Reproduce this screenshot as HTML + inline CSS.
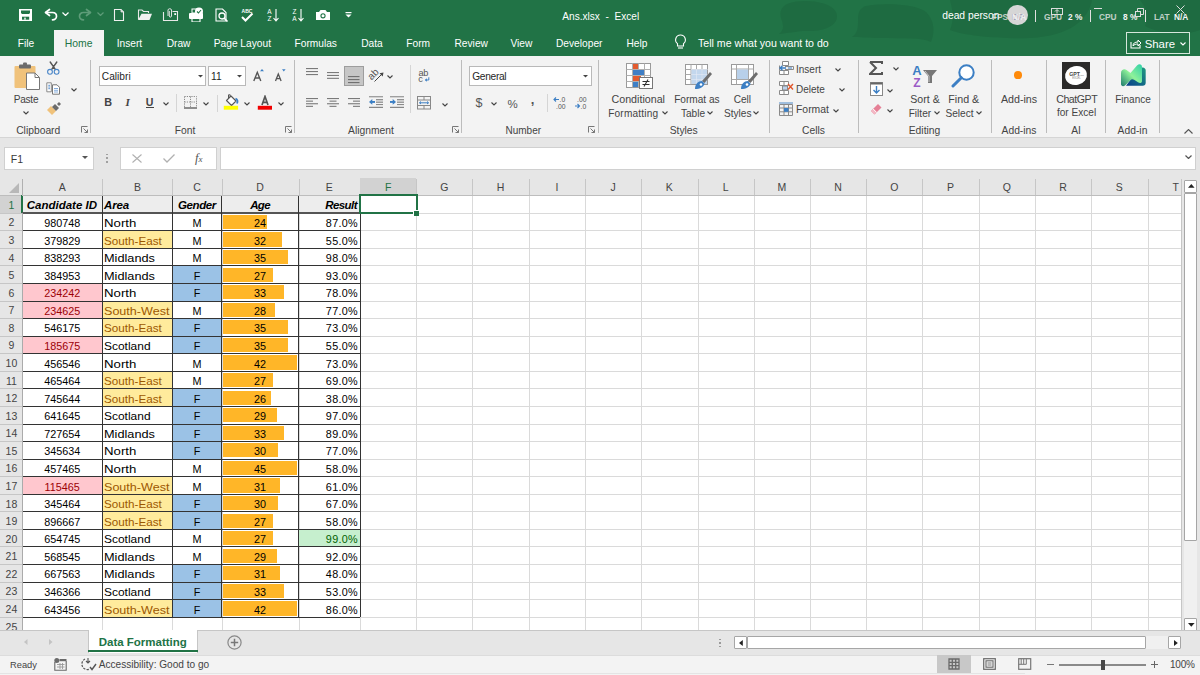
<!DOCTYPE html><html><head><meta charset="utf-8"><style>
*{margin:0;padding:0;box-sizing:border-box}
html,body{width:1200px;height:675px;overflow:hidden}body{position:relative;font-family:"Liberation Sans", sans-serif;background:#fff}
.a{position:absolute;white-space:nowrap}
</style></head><body><div style="position:absolute;left:0;top:0;width:1200px;height:675px;overflow:hidden;background:#fff">
<div class="a" style="left:0.00px;top:0.00px;width:1200.00px;height:56.00px;background:#217346;"></div>
<svg class="a" style="left:0;top:0" width="1200" height="56" viewBox="0 0 1200 56"><g fill="#1e6a40" opacity="0.8"><path d="M790 3 C800 -1 830 0 836 12 C841 24 826 32 806 31 C797 31 790 33 779 34 C785 29 783 24 781 18 C779 10 783 5 790 3Z"/><path d="M866 6 C880 3 915 3 926 12 C936 22 934 35 931 42 C922 37 905 39 880 38 C868 38 860 37 852 37 C858 33 858 28 858 20 C858 12 860 8 866 6Z"/><path d="M950 0 H1092 C1088 20 1070 36 1030 38 C1000 39 965 36 950 30 C955 18 952 8 950 0Z"/><path d="M1140 0 H1200 V30 C1185 36 1160 34 1145 26 C1150 16 1146 8 1140 0Z"/></g></svg>
<svg class="a" style="left:19.00px;top:8.00px" width="14" height="14" viewBox="0 0 14 14"><rect x="0" y="1" width="13" height="12" fill="#fff"/><path d="M2 2.5 H11 V5 L10 6 H3 L2 5Z" fill="#217346"/><rect x="3" y="8.7" width="7.2" height="3" fill="#217346"/><rect x="5.3" y="9.6" width="1.4" height="2.1" fill="#fff"/></svg>
<svg class="a" style="left:44.00px;top:8.00px" width="14" height="13" viewBox="0 0 14 13"><path d="M5.5 1.5 L1.5 4.5 L5.5 7.5" fill="none" stroke="#fff" stroke-width="1.7" stroke-linejoin="round" stroke-linecap="round"/><path d="M2 4.5 H8.5 C11 4.5 12.5 6.2 12.5 8.3 C12.5 10.4 10.8 11.8 8.5 11.8" fill="none" stroke="#fff" stroke-width="1.7" stroke-linecap="round"/></svg>
<svg class="a" style="left:62.00px;top:12.00px" width="7" height="4" viewBox="0 0 7 4"><path d="M0.5 0.5 L3.5 3.5 L6.5 0.5" fill="none" stroke="#fff" stroke-width="1.2"/></svg>
<svg class="a" style="left:78.00px;top:8.00px" width="14" height="13" viewBox="0 0 14 13"><path d="M8.5 1.5 L12.5 4.5 L8.5 7.5" fill="none" stroke="#5e9c79" stroke-width="1.7" stroke-linejoin="round" stroke-linecap="round"/><path d="M12 4.5 H5.5 C3 4.5 1.5 6.2 1.5 8.3 C1.5 10.4 3.2 11.8 5.5 11.8" fill="none" stroke="#5e9c79" stroke-width="1.7" stroke-linecap="round"/></svg>
<svg class="a" style="left:97.00px;top:12.00px" width="7" height="4" viewBox="0 0 7 4"><path d="M0.5 0.5 L3.5 3.5 L6.5 0.5" fill="none" stroke="#5e9c79" stroke-width="1.2"/></svg>
<svg class="a" style="left:113.00px;top:8.00px" width="12" height="14" viewBox="0 0 12 14"><path d="M1.5 1.5 H8 L10.5 4 V12.5 H1.5 Z" fill="none" stroke="#f0f0f0" stroke-width="1.1"/><path d="M8 1.5 V4 H10.5" fill="#ddd" stroke="#ddd" stroke-width="0.8"/></svg>
<svg class="a" style="left:137.00px;top:8.00px" width="16" height="13" viewBox="0 0 16 13"><path d="M1.5 11.5 V2 H5 L6.5 3.5 H11.5 V5" fill="none" stroke="#e8e8e8" stroke-width="1.1"/><path d="M4.5 5.8 H15 L12.5 12 H1 Z" fill="#f0f0f0"/></svg>
<svg class="a" style="left:162.00px;top:7.00px" width="17" height="15" viewBox="0 0 17 15"><path d="M1.5 5 V13.5 H15.5 V4.5 H10.5" fill="none" stroke="#e8e8e8" stroke-width="1.1"/><path d="M6 9 V3 C6 1.3 9.5 1.3 9.5 3 V9 C9.5 10.5 7.3 10.5 7.3 9 V4" fill="none" stroke="#e0e0e0" stroke-width="1"/><rect x="12.3" y="6.2" width="1.8" height="1.8" fill="#fff"/></svg>
<svg class="a" style="left:188.00px;top:7.00px" width="16" height="15" viewBox="0 0 16 15"><rect x="1" y="6" width="14" height="6" rx="1" fill="#fff"/><rect x="4" y="10" width="8" height="5" fill="none" stroke="#fff" stroke-width="1.1"/><rect x="4" y="2" width="6" height="4" fill="none" stroke="#fff" stroke-width="1"/><circle cx="11" cy="4.5" r="4" fill="#fff"/><path d="M9 4.5 L10.5 6 L13 3" fill="none" stroke="#217346" stroke-width="1.1"/></svg>
<svg class="a" style="left:215.00px;top:8.00px" width="14" height="14" viewBox="0 0 14 14"><path d="M1 1 H7.5 L11 4.5 V13 H1 Z" fill="none" stroke="#fff" stroke-width="1.1"/><circle cx="7" cy="8" r="3" fill="none" stroke="#fff" stroke-width="1.3"/><path d="M9 10 L12.5 13.5" stroke="#fff" stroke-width="1.6"/></svg>
<svg class="a" style="left:240.00px;top:8.00px" width="14" height="14" viewBox="0 0 14 14"><text x="7" y="4.5" font-size="5" font-weight="bold" text-anchor="middle" fill="#fff" font-family="Liberation Sans">ABC</text><path d="M2 9 L5.5 12.5 L12.5 5.5" fill="none" stroke="#fff" stroke-width="2"/></svg>
<svg class="a" style="left:266.00px;top:8.00px" width="14" height="14" viewBox="0 0 14 14"><text x="3.5" y="6" font-size="6.5" text-anchor="middle" fill="#fff" font-family="Liberation Sans">A</text><text x="3.5" y="13" font-size="6.5" text-anchor="middle" fill="#fff" font-family="Liberation Sans">Z</text><path d="M10 1 V12.5 M7.5 10 L10 12.8 L12.5 10" fill="none" stroke="#fff" stroke-width="1.1"/></svg>
<svg class="a" style="left:291.00px;top:8.00px" width="14" height="14" viewBox="0 0 14 14"><text x="3.5" y="6" font-size="6.5" text-anchor="middle" fill="#fff" font-family="Liberation Sans">Z</text><text x="3.5" y="13" font-size="6.5" text-anchor="middle" fill="#fff" font-family="Liberation Sans">A</text><path d="M10 1 V12.5 M7.5 10 L10 12.8 L12.5 10" fill="none" stroke="#fff" stroke-width="1.1"/></svg>
<svg class="a" style="left:315.00px;top:9.00px" width="16" height="12" viewBox="0 0 16 12"><path d="M1 3 H4 L5.5 1 H10.5 L12 3 H15 V11 H1 Z" fill="#fff"/><circle cx="8" cy="6.8" r="2.6" fill="#217346"/><circle cx="8" cy="6.8" r="1.5" fill="#fff"/></svg>
<svg class="a" style="left:345.00px;top:12.00px" width="7" height="6" viewBox="0 0 7 6"><rect x="0.5" y="0" width="6" height="1.2" fill="#fff"/><path d="M0.5 2.5 H6.5 L3.5 5.5 Z" fill="#fff"/></svg>
<div class="a" style="left:562.30px;top:12px;font-size:10.1px;line-height:10.1px;color:#fff;font-weight:normal;font-style:normal;">Ans.xlsx&nbsp;&nbsp;-&nbsp;&nbsp;Excel</div>
<div class="a" style="left:942.20px;top:11px;font-size:10.3px;line-height:10.3px;color:#fff;font-weight:normal;font-style:normal;">dead person</div>
<div class="a" style="left:1007.3px;top:4.6px;width:20.4px;height:20.4px;border-radius:50%;background:#d6d6d6"></div>
<div class="a" style="left:1011.50px;top:12px;font-size:9.5px;line-height:9.5px;color:#9a98b0;font-weight:normal;font-style:normal;">DP</div>
<div class="a" style="left:992.00px;top:13px;font-size:8.3px;line-height:8.3px;color:#e8e8e8;font-weight:bold;font-style:normal;opacity:.8">FPS</div>
<div class="a" style="left:1012.00px;top:13px;font-size:8.3px;line-height:8.3px;color:#f5f5f5;font-weight:bold;font-style:normal;opacity:.9">N/A</div>
<div class="a" style="left:1035.00px;top:9.50px;width:1.00px;height:12.00px;background:#e0e0e0;"></div>
<div class="a" style="left:1044.00px;top:13px;font-size:8.3px;line-height:8.3px;color:#e8e8e8;font-weight:bold;font-style:normal;opacity:.8">GPU</div>
<div class="a" style="left:1068.00px;top:13px;font-size:8.3px;line-height:8.3px;color:#f5f5f5;font-weight:bold;font-style:normal;">2 %</div>
<svg class="a" style="left:1051.00px;top:8.00px" width="13" height="7" viewBox="0 0 13 7"><rect x="0.5" y="0.5" width="11" height="6" fill="none" stroke="#ddd" stroke-width="1"/><path d="M6 5.5 V2 M4 3.5 L6 1.5 L8 3.5" stroke="#ddd" fill="none" stroke-width="1"/></svg>
<div class="a" style="left:1090.00px;top:9.50px;width:1.00px;height:12.00px;background:#e0e0e0;"></div>
<div class="a" style="left:1099.00px;top:13px;font-size:8.3px;line-height:8.3px;color:#e8e8e8;font-weight:bold;font-style:normal;opacity:.8">CPU</div>
<div class="a" style="left:1123.00px;top:13px;font-size:8.3px;line-height:8.3px;color:#f5f5f5;font-weight:bold;font-style:normal;">8 %</div>
<svg class="a" style="left:1094.00px;top:8.00px" width="8" height="2" viewBox="0 0 8 2"><rect x="0" y="0" width="8" height="1" fill="#ddd"/></svg>
<svg class="a" style="left:1135.00px;top:8.00px" width="9" height="10" viewBox="0 0 9 10"><rect x="0.5" y="3.5" width="5" height="5" fill="none" stroke="#ddd"/><path d="M2.5 3.5 V0.5 H8.5 V6.5 H5.5" fill="none" stroke="#ddd"/></svg>
<div class="a" style="left:1145.00px;top:9.50px;width:1.00px;height:12.00px;background:#e0e0e0;"></div>
<div class="a" style="left:1154.00px;top:13px;font-size:8.3px;line-height:8.3px;color:#e8e8e8;font-weight:bold;font-style:normal;opacity:.8">LAT</div>
<div class="a" style="left:1174.00px;top:13px;font-size:8.3px;line-height:8.3px;color:#f5f5f5;font-weight:bold;font-style:normal;">N/A</div>
<svg class="a" style="left:1176.00px;top:5.00px" width="9" height="9" viewBox="0 0 9 9"><path d="M0.5 0.5 L8.5 8.5 M8.5 0.5 L0.5 8.5" stroke="#ddd" stroke-width="1"/></svg>
<div class="a" style="left:53.70px;top:30.00px;width:50.80px;height:26.00px;background:#f3f3f3;"></div>
<div class="a" style="left:17.80px;top:39px;font-size:10.2px;line-height:10.2px;color:#fff;font-weight:normal;font-style:normal;">File</div>
<div class="a" style="left:116.70px;top:39px;font-size:10.2px;line-height:10.2px;color:#fff;font-weight:normal;font-style:normal;">Insert</div>
<div class="a" style="left:166.70px;top:39px;font-size:10.2px;line-height:10.2px;color:#fff;font-weight:normal;font-style:normal;">Draw</div>
<div class="a" style="left:213.75px;top:39px;font-size:10.2px;line-height:10.2px;color:#fff;font-weight:normal;font-style:normal;">Page Layout</div>
<div class="a" style="left:294.50px;top:39px;font-size:10.2px;line-height:10.2px;color:#fff;font-weight:normal;font-style:normal;">Formulas</div>
<div class="a" style="left:361.25px;top:39px;font-size:10.2px;line-height:10.2px;color:#fff;font-weight:normal;font-style:normal;">Data</div>
<div class="a" style="left:406.25px;top:39px;font-size:10.2px;line-height:10.2px;color:#fff;font-weight:normal;font-style:normal;">Form</div>
<div class="a" style="left:454.50px;top:39px;font-size:10.2px;line-height:10.2px;color:#fff;font-weight:normal;font-style:normal;">Review</div>
<div class="a" style="left:510.40px;top:39px;font-size:10.2px;line-height:10.2px;color:#fff;font-weight:normal;font-style:normal;">View</div>
<div class="a" style="left:556.00px;top:39px;font-size:10.2px;line-height:10.2px;color:#fff;font-weight:normal;font-style:normal;">Developer</div>
<div class="a" style="left:626.50px;top:39px;font-size:10.2px;line-height:10.2px;color:#fff;font-weight:normal;font-style:normal;">Help</div>
<div class="a" style="left:64.70px;top:39px;font-size:10.4px;line-height:10.4px;color:#217346;font-weight:normal;font-style:normal;">Home</div>
<svg class="a" style="left:674.00px;top:34.00px" width="13" height="16" viewBox="0 0 13 16"><path d="M6.5 1 a4.8 4.8 0 0 0 -3 8.6 V12 H9.5 V9.6 A4.8 4.8 0 0 0 6.5 1 Z" fill="none" stroke="#fff" stroke-width="1.1"/><path d="M4 14 H9" stroke="#fff" stroke-width="1.1"/></svg>
<div class="a" style="left:698.00px;top:38px;font-size:10.6px;line-height:10.6px;color:#fff;font-weight:normal;font-style:normal;">Tell me what you want to do</div>
<div class="a" style="left:1126px;top:32.4px;width:63.5px;height:21.3px;border:1px solid #d6e7dc;"></div>
<svg class="a" style="left:1130.00px;top:38.00px" width="12" height="11" viewBox="0 0 12 11"><path d="M1 4 V10 H10 V7" fill="none" stroke="#fff" stroke-width="1.1"/><path d="M3 8 C3 5 5 4 8 4 V2 L11 5 L8 8 V6 C6 6 4 6.5 3 8Z" fill="none" stroke="#fff" stroke-width="1"/></svg>
<div class="a" style="left:1144.70px;top:39px;font-size:11.4px;line-height:11.4px;color:#fff;font-weight:normal;font-style:normal;">Share</div>
<svg class="a" style="left:1180.00px;top:41.50px" width="6" height="4" viewBox="0 0 6 4"><path d="M0.5 0.5 L3 3 L5.5 0.5" fill="none" stroke="#fff" stroke-width="1.1"/></svg>
<div class="a" style="left:0.00px;top:56.00px;width:1200.00px;height:81.00px;background:#f3f3f3;"></div>
<div class="a" style="left:0.00px;top:137.00px;width:1200.00px;height:1.00px;background:#d5d5d5;"></div>
<svg class="a" style="left:13.00px;top:62.00px" width="28" height="29" viewBox="0 0 28 29"><rect x="1.5" y="4" width="21" height="22" rx="1" fill="#f0c27b"/><rect x="6" y="2.5" width="12" height="4" rx="1" fill="#6b6b6b"/><rect x="10" y="0.5" width="4" height="3" rx="1" fill="#6b6b6b"/><path d="M13.5 11 H22 L26.5 15.5 V27.5 H13.5 Z" fill="#fff" stroke="#777" stroke-width="1"/><path d="M22 11 V15.5 H26.5" fill="none" stroke="#777" stroke-width="1"/></svg>
<div class="a" style="left:13.70px;top:95px;font-size:10.1px;line-height:10.1px;color:#444444;font-weight:normal;font-style:normal;letter-spacing:-0.25px">Paste</div>
<svg class="a" style="left:23.00px;top:111.30px" width="6" height="4" viewBox="0 0 6 4"><path d="M0.5 0.5 L3 3 L5.5 0.5" fill="none" stroke="#444" stroke-width="1.1"/></svg>
<svg class="a" style="left:46.00px;top:61.00px" width="15" height="15" viewBox="0 0 15 15"><path d="M4.2 1 L9.3 8.3 M10.8 1 L5.7 8.3" stroke="#555" stroke-width="1.4" stroke-linecap="round"/><circle cx="4" cy="10.8" r="2.4" fill="none" stroke="#4a86c8" stroke-width="1.1"/><circle cx="10.6" cy="10.8" r="2.4" fill="none" stroke="#4a86c8" stroke-width="1.1"/></svg>
<svg class="a" style="left:46.00px;top:82.00px" width="15" height="13" viewBox="0 0 15 13"><path d="M0.8 0.8 H5.3 V9.8 H0.8 Z" fill="#fff" stroke="#8a8a8a" stroke-width="1"/><path d="M2.3 3.3 H4 M2.3 5 H4 M2.3 6.7 H4" stroke="#4a86c8" stroke-width="0.9"/><path d="M6.5 2.8 H11 L13.5 5.3 V12.2 H6.5 Z" fill="#fff" stroke="#777" stroke-width="1"/><path d="M8 6.5 H12 M8 8.3 H12 M8 10 H12" stroke="#7aa6da" stroke-width="0.9"/></svg>
<svg class="a" style="left:71.00px;top:88.00px" width="6" height="4" viewBox="0 0 6 4"><path d="M0.5 0.5 L3 3 L5.5 0.5" fill="none" stroke="#444" stroke-width="1.1"/></svg>
<svg class="a" style="left:46.00px;top:102.00px" width="15" height="13" viewBox="0 0 15 13"><path d="M1 8 L6 13 L10 9 L5 4 Z" fill="#f0c27b"/><path d="M6 5 L9 2 L13 6 L10 9 Z" fill="#6b6b6b"/><path d="M11 2 L13 0 L15 2 L13 4Z" fill="#6b6b6b"/></svg>
<div class="a" style="left:16.20px;top:126px;font-size:10.3px;line-height:10.3px;color:#444444;font-weight:normal;font-style:normal;">Clipboard</div>
<svg class="a" style="left:80.80px;top:126.30px" width="8" height="7" viewBox="0 0 8 7"><path d="M0.5 6.5 V0.5 H6.5" fill="none" stroke="#777" stroke-width="1"/><path d="M2.5 2.5 L6.5 6.5 M3.5 6.5 H6.5 V3.5" fill="none" stroke="#777" stroke-width="1"/></svg>
<div class="a" style="left:90.00px;top:59.70px;width:1.00px;height:73.30px;background:#bcbcbc;"></div>
<div class="a" style="left:98.5px;top:66.2px;width:107.7px;height:19.4px;background:#fff;border:1px solid #b9b9b9"></div>
<div class="a" style="left:101.80px;top:72px;font-size:10.2px;line-height:10.2px;color:#262626;font-weight:normal;font-style:normal;">Calibri</div>
<svg class="a" style="left:197.50px;top:74.50px" width="5" height="3" viewBox="0 0 5 3"><path d="M0 0 H5 L2.5 2.5Z" fill="#444"/></svg>
<div class="a" style="left:208.4px;top:66.2px;width:37.2px;height:19.4px;background:#fff;border:1px solid #b9b9b9"></div>
<div class="a" style="left:211.00px;top:72px;font-size:10.2px;line-height:10.2px;color:#262626;font-weight:normal;font-style:normal;">11</div>
<svg class="a" style="left:236.70px;top:74.50px" width="5" height="3" viewBox="0 0 5 3"><path d="M0 0 H5 L2.5 2.5Z" fill="#444"/></svg>
<svg class="a" style="left:252.00px;top:68.00px" width="14" height="14" viewBox="0 0 14 14"><path d="M1.8 13 L5.3 4.3 L8.8 13 M3 10 H7.6" fill="none" stroke="#555" stroke-width="1.4"/><path d="M8 3.3 L10 1 L12 3.3Z" fill="#3c7fc4"/></svg>
<svg class="a" style="left:274.00px;top:68.00px" width="14" height="14" viewBox="0 0 14 14"><path d="M1.5 13 L4.3 6 L7.1 13 M2.5 10.6 H6.1" fill="none" stroke="#555" stroke-width="1.3"/><path d="M8 1.2 H11.6 L9.8 3.6Z" fill="#3c7fc4"/></svg>
<div class="a" style="left:104.30px;top:97px;font-size:10.8px;line-height:10.8px;color:#444;font-weight:bold;font-style:normal;">B</div>
<div class="a" style="left:125.50px;top:97px;font-size:11px;line-height:11px;color:#444;font-weight:normal;font-style:italic;font-family:'Liberation Serif';font-weight:bold">I</div>
<div class="a" style="left:145.80px;top:97px;font-size:10.6px;line-height:10.6px;color:#444;font-weight:bold;font-style:normal;">U</div>
<div class="a" style="left:146.00px;top:107.00px;width:7.70px;height:1.20px;background:#444;"></div>
<svg class="a" style="left:162.80px;top:101.80px" width="6" height="4" viewBox="0 0 6 4"><path d="M0.5 0.5 L3 3 L5.5 0.5" fill="none" stroke="#444" stroke-width="1.1"/></svg>
<div class="a" style="left:176.30px;top:94.00px;width:1.00px;height:18.00px;background:#d5d5d5;"></div>
<svg class="a" style="left:183.50px;top:95.50px" width="13" height="13" viewBox="0 0 13 13"><path d="M0.5 0.5 H12.5 V11 M0.5 0.5 V11 M6.5 0.5 V11 M0.5 6 H12.5" fill="none" stroke="#8a8a8a" stroke-width="1" stroke-dasharray="1.2 1.1"/><path d="M0 12 H13" stroke="#555" stroke-width="1.3"/></svg>
<svg class="a" style="left:203.00px;top:101.80px" width="6" height="4" viewBox="0 0 6 4"><path d="M0.5 0.5 L3 3 L5.5 0.5" fill="none" stroke="#444" stroke-width="1.1"/></svg>
<div class="a" style="left:217.10px;top:94.50px;width:1.00px;height:17.50px;background:#d5d5d5;"></div>
<svg class="a" style="left:223.00px;top:94.00px" width="17" height="16" viewBox="0 0 17 16"><path d="M3.5 6.5 L8 2 L13 7 L8.5 11.5 Z" fill="#fff" stroke="#555" stroke-width="1.1" stroke-linejoin="round"/><path d="M5.5 4.5 V0.8 H7.2 V3" fill="none" stroke="#555" stroke-width="1"/><path d="M12.5 4.5 Q15.5 6 14 9.5" fill="none" stroke="#3c7fc4" stroke-width="1.8"/><rect x="0.8" y="11.8" width="14.3" height="3.9" fill="#ffff00"/></svg>
<svg class="a" style="left:243.50px;top:101.80px" width="6" height="4" viewBox="0 0 6 4"><path d="M0.5 0.5 L3 3 L5.5 0.5" fill="none" stroke="#444" stroke-width="1.1"/></svg>
<svg class="a" style="left:257.00px;top:95.00px" width="16" height="15" viewBox="0 0 16 15"><path d="M5 10 L8 1.5 L11 10 M6 7.3 H10" fill="none" stroke="#555" stroke-width="1.7"/><rect x="0.8" y="10.8" width="14.2" height="3.9" fill="#f00000"/></svg>
<svg class="a" style="left:277.70px;top:101.80px" width="6" height="4" viewBox="0 0 6 4"><path d="M0.5 0.5 L3 3 L5.5 0.5" fill="none" stroke="#444" stroke-width="1.1"/></svg>
<div class="a" style="left:85.00px;width:200px;text-align:center;top:126px;font-size:10.3px;line-height:10.3px;color:#444444;font-weight:normal;font-style:normal;">Font</div>
<svg class="a" style="left:284.50px;top:126.30px" width="8" height="7" viewBox="0 0 8 7"><path d="M0.5 6.5 V0.5 H6.5" fill="none" stroke="#777" stroke-width="1"/><path d="M2.5 2.5 L6.5 6.5 M3.5 6.5 H6.5 V3.5" fill="none" stroke="#777" stroke-width="1"/></svg>
<div class="a" style="left:294.00px;top:59.70px;width:1.00px;height:73.30px;background:#bcbcbc;"></div>
<svg class="a" style="left:306.00px;top:67.90px" width="12" height="10" viewBox="0 0 12 10"><rect x="0" y="0" width="12" height="1.1" fill="#7a7a7a"/><rect x="0" y="3" width="12" height="1.1" fill="#7a7a7a"/><rect x="0" y="6" width="12" height="1.1" fill="#7a7a7a"/></svg>
<svg class="a" style="left:327.00px;top:71.70px" width="12" height="9.7" viewBox="0 0 12 9.7"><rect x="0.0" y="0.0" width="12" height="1.1" fill="#7a7a7a"/><rect x="0.0" y="2.9" width="12" height="1.1" fill="#7a7a7a"/><rect x="0.0" y="5.8" width="12" height="1.1" fill="#7a7a7a"/></svg>
<div class="a" style="left:344.4px;top:66.2px;width:19.3px;height:19.7px;background:#c6c6c6;border:1px solid #9d9d9d"></div>
<svg class="a" style="left:348.20px;top:76.00px" width="11.5" height="10" viewBox="0 0 11.5 10"><rect x="0" y="0" width="11.5" height="1.1" fill="#707070"/><rect x="0" y="3" width="11.5" height="1.1" fill="#707070"/><rect x="0" y="6" width="11.5" height="1.1" fill="#707070"/></svg>
<svg class="a" style="left:367.00px;top:67.00px" width="18" height="16" viewBox="0 0 18 16"><text x="0" y="0" font-size="10" fill="#555" font-family="Liberation Sans" transform="translate(4.5 13.5) rotate(-45)">ab</text><path d="M7.5 14.5 L15.5 6.5" stroke="#444" stroke-width="1"/><path d="M16.5 5.5 L12.5 6.3 L15.7 9.5Z" fill="#444"/></svg>
<svg class="a" style="left:387.00px;top:74.50px" width="6" height="4" viewBox="0 0 6 4"><path d="M0.5 0.5 L3 3 L5.5 0.5" fill="none" stroke="#444" stroke-width="1.1"/></svg>
<svg class="a" style="left:306.00px;top:97.90px" width="12" height="11.4" viewBox="0 0 12 11.4"><rect x="0" y="0.0" width="12" height="1.1" fill="#7a7a7a"/><rect x="0" y="2.6" width="7" height="1.1" fill="#7a7a7a"/><rect x="0" y="5.2" width="12" height="1.1" fill="#7a7a7a"/><rect x="0" y="7.800000000000001" width="7" height="1.1" fill="#7a7a7a"/></svg>
<svg class="a" style="left:327.00px;top:97.90px" width="12" height="11.4" viewBox="0 0 12 11.4"><rect x="0.0" y="0.0" width="12" height="1.1" fill="#7a7a7a"/><rect x="2.5" y="2.6" width="7" height="1.1" fill="#7a7a7a"/><rect x="0.0" y="5.2" width="12" height="1.1" fill="#7a7a7a"/><rect x="2.5" y="7.800000000000001" width="7" height="1.1" fill="#7a7a7a"/></svg>
<svg class="a" style="left:348.20px;top:97.90px" width="12" height="11.4" viewBox="0 0 12 11.4"><rect x="0" y="0.0" width="12" height="1.1" fill="#7a7a7a"/><rect x="5" y="2.6" width="7" height="1.1" fill="#7a7a7a"/><rect x="0" y="5.2" width="12" height="1.1" fill="#7a7a7a"/><rect x="5" y="7.800000000000001" width="7" height="1.1" fill="#7a7a7a"/></svg>
<svg class="a" style="left:369.00px;top:96.00px" width="14" height="12" viewBox="0 0 14 12"><rect x="0" y="0.2" width="14" height="1.1" fill="#8a8a8a"/><rect x="7" y="3.2" width="7" height="1.1" fill="#7a7a7a"/><rect x="7" y="5.6" width="7" height="1.1" fill="#7a7a7a"/><rect x="7" y="8" width="7" height="1.1" fill="#8a8a8a"/><rect x="0" y="10.8" width="14" height="1.1" fill="#7a7a7a"/><path d="M0 5.9 L3.3 3 V8.8Z" fill="#3c7fc4"/><rect x="3" y="5" width="3" height="1.9" fill="#3c7fc4"/></svg>
<svg class="a" style="left:390.00px;top:96.00px" width="14" height="12" viewBox="0 0 14 12"><rect x="0" y="0.2" width="14" height="1.1" fill="#8a8a8a"/><rect x="7" y="3.2" width="7" height="1.1" fill="#7a7a7a"/><rect x="7" y="5.6" width="7" height="1.1" fill="#7a7a7a"/><rect x="7" y="8" width="7" height="1.1" fill="#8a8a8a"/><rect x="0" y="10.8" width="14" height="1.1" fill="#7a7a7a"/><path d="M6 5.9 L2.7 3 V8.8Z" fill="#3c7fc4"/><rect x="0" y="5" width="3" height="1.9" fill="#3c7fc4"/></svg>
<div class="a" style="left:410.00px;top:65.30px;width:1.00px;height:47.30px;background:#d5d5d5;"></div>
<svg class="a" style="left:417.00px;top:68.00px" width="15" height="16" viewBox="0 0 15 16"><text x="1.5" y="7.8" font-size="9.2" fill="#555" font-family="Liberation Sans" letter-spacing="-0.3">ab</text><text x="1.3" y="14" font-size="9.2" fill="#555" font-family="Liberation Sans">c</text><path d="M11.8 9.3 V12 H8.5" fill="none" stroke="#3c7fc4" stroke-width="1"/><path d="M7.8 12 L9.8 10.3 V13.7Z" fill="#3c7fc4"/></svg>
<svg class="a" style="left:417.00px;top:95.50px" width="14" height="14" viewBox="0 0 14 14"><rect x="0.5" y="0.5" width="13" height="12.5" fill="none" stroke="#888" stroke-width="1"/><path d="M0.5 4 H13.5 M0.5 9.5 H13.5 M7 0.5 V4 M7 9.5 V13" stroke="#888" stroke-width="1"/><path d="M2.5 6.8 H11.5 M4 5.5 L2.5 6.8 L4 8 M10 5.5 L11.5 6.8 L10 8" fill="none" stroke="#3c7fc4" stroke-width="1"/></svg>
<svg class="a" style="left:441.60px;top:102.50px" width="6" height="4" viewBox="0 0 6 4"><path d="M0.5 0.5 L3 3 L5.5 0.5" fill="none" stroke="#444" stroke-width="1.1"/></svg>
<div class="a" style="left:271.00px;width:200px;text-align:center;top:126px;font-size:10.3px;line-height:10.3px;color:#444444;font-weight:normal;font-style:normal;">Alignment</div>
<svg class="a" style="left:451.50px;top:126.30px" width="8" height="7" viewBox="0 0 8 7"><path d="M0.5 6.5 V0.5 H6.5" fill="none" stroke="#777" stroke-width="1"/><path d="M2.5 2.5 L6.5 6.5 M3.5 6.5 H6.5 V3.5" fill="none" stroke="#777" stroke-width="1"/></svg>
<div class="a" style="left:461.00px;top:59.70px;width:1.00px;height:73.30px;background:#bcbcbc;"></div>
<div class="a" style="left:469.4px;top:66.2px;width:122.2px;height:19.4px;background:#fff;border:1px solid #b9b9b9"></div>
<div class="a" style="left:472.20px;top:72px;font-size:10.2px;line-height:10.2px;color:#262626;font-weight:normal;font-style:normal;letter-spacing:-0.3px">General</div>
<svg class="a" style="left:583.00px;top:75.00px" width="5" height="3" viewBox="0 0 5 3"><path d="M0 0 H5 L2.5 2.5Z" fill="#444"/></svg>
<div class="a" style="left:475.50px;top:97px;font-size:12.5px;line-height:12.5px;color:#555;font-weight:normal;font-style:normal;">$</div>
<svg class="a" style="left:491.40px;top:102.30px" width="6" height="4" viewBox="0 0 6 4"><path d="M0.5 0.5 L3 3 L5.5 0.5" fill="none" stroke="#444" stroke-width="1.1"/></svg>
<div class="a" style="left:507.50px;top:99px;font-size:11.5px;line-height:11.5px;color:#555;font-weight:normal;font-style:normal;">%</div>
<div class="a" style="left:530.80px;top:93px;font-size:13px;line-height:13px;color:#555;font-weight:bold;font-style:normal;">,</div>
<div class="a" style="left:546.80px;top:94.00px;width:1.00px;height:18.00px;background:#d5d5d5;"></div>
<svg class="a" style="left:553.00px;top:96.00px" width="15" height="13" viewBox="0 0 15 13"><path d="M1 3.5 H6 M3 1.5 L1 3.5 L3 5.5" fill="none" stroke="#3c7fc4" stroke-width="1.1"/><text x="6.5" y="6" font-size="6.8" fill="#555" font-family="Liberation Sans">.0</text><text x="3" y="12.5" font-size="6.8" fill="#555" font-family="Liberation Sans">.00</text></svg>
<svg class="a" style="left:574.00px;top:96.00px" width="15" height="13" viewBox="0 0 15 13"><text x="3" y="6" font-size="6.8" fill="#555" font-family="Liberation Sans">.00</text><path d="M1 10 H5.5 M3.5 8 L5.5 10 L3.5 12" fill="none" stroke="#3c7fc4" stroke-width="1.1"/><text x="6.5" y="12.5" font-size="6.8" fill="#555" font-family="Liberation Sans">.0</text></svg>
<div class="a" style="left:423.30px;width:200px;text-align:center;top:126px;font-size:10.0px;line-height:10.0px;color:#444444;font-weight:normal;font-style:normal;">Number</div>
<svg class="a" style="left:588.00px;top:126.30px" width="8" height="7" viewBox="0 0 8 7"><path d="M0.5 6.5 V0.5 H6.5" fill="none" stroke="#777" stroke-width="1"/><path d="M2.5 2.5 L6.5 6.5 M3.5 6.5 H6.5 V3.5" fill="none" stroke="#777" stroke-width="1"/></svg>
<div class="a" style="left:598.00px;top:59.70px;width:1.00px;height:73.30px;background:#bcbcbc;"></div>
<svg class="a" style="left:626.00px;top:63.00px" width="27" height="27" viewBox="0 0 27 27"><g stroke="#9a9a9a" stroke-width="1" fill="#fff"><rect x="0.5" y="0.5" width="24" height="24"/></g><path d="M0.5 6.5 H24.5 M0.5 12.5 H24.5 M0.5 18.5 H24.5 M6.5 0.5 V24.5 M12.5 0.5 V24.5 M18.5 0.5 V24.5" stroke="#b0b0b0" stroke-width="1"/><rect x="7" y="1" width="5" height="5" fill="#e35b2f"/><rect x="7" y="7" width="11" height="5" fill="#3f7fc6"/><rect x="7" y="13" width="8" height="5" fill="#e35b2f"/><rect x="7" y="19" width="5" height="5" fill="#3f7fc6"/><rect x="13.5" y="14.5" width="13" height="11" fill="#fff" stroke="#777" stroke-width="1"/><path d="M16.5 18.5 H23.5 M16.5 21.5 H23.5 M22 16.5 L18 23.5" stroke="#333" stroke-width="1.1"/></svg>
<div class="a" style="left:611.50px;top:94px;font-size:10.7px;line-height:10.7px;color:#444444;font-weight:normal;font-style:normal;">Conditional</div>
<div class="a" style="left:608.20px;top:109px;font-size:10.1px;line-height:10.1px;color:#444444;font-weight:normal;font-style:normal;letter-spacing:0.2px">Formatting</div>
<svg class="a" style="left:662.00px;top:110.50px" width="6" height="4" viewBox="0 0 6 4"><path d="M0.5 0.5 L3 3 L5.5 0.5" fill="none" stroke="#444" stroke-width="1.1"/></svg>
<svg class="a" style="left:684.50px;top:64.00px" width="27" height="26" viewBox="0 0 27 26"><rect x="0.5" y="0.5" width="22" height="20" fill="#fff" stroke="#9a9a9a"/><path d="M0.5 5.5 H22.5 M0.5 10.5 H22.5 M0.5 15.5 H22.5 M6 0.5 V20.5 M11.5 0.5 V20.5 M17 0.5 V20.5" stroke="#a8a8a8"/><rect x="6.5" y="6" width="15.5" height="14" fill="#b8d0ea" opacity="0.85"/><path d="M6 5.5 H22.5 M6 10.5 H22.5 M6 15.5 H22.5 M11.5 5.5 V20.5 M17 5.5 V20.5" stroke="#dfe9f5" stroke-width="0.8"/><path d="M17 17 L25 8 L27 10 L19.5 19 Z" fill="#6e6e6e"/><path d="M10 25 C10 20 13 17 17 17 L19.5 19.5 C19 23 15 25 10 25Z" fill="#3c7fc4"/><circle cx="16" cy="20.5" r="1.3" fill="#fff"/></svg>
<div class="a" style="left:674.20px;top:95px;font-size:10.1px;line-height:10.1px;color:#444444;font-weight:normal;font-style:normal;">Format as</div>
<div class="a" style="left:680.90px;top:109px;font-size:10.1px;line-height:10.1px;color:#444444;font-weight:normal;font-style:normal;">Table</div>
<svg class="a" style="left:707.00px;top:110.50px" width="6" height="4" viewBox="0 0 6 4"><path d="M0.5 0.5 L3 3 L5.5 0.5" fill="none" stroke="#444" stroke-width="1.1"/></svg>
<svg class="a" style="left:730.50px;top:63.50px" width="27" height="26" viewBox="0 0 27 26"><rect x="0.5" y="0.5" width="22" height="20" fill="#fff" stroke="#9a9a9a"/><path d="M0.5 5 H22.5 M0.5 15.5 H22.5 M5.5 0.5 V20.5 M17.5 0.5 V20.5" stroke="#a8a8a8"/><rect x="6" y="5.5" width="11" height="9.5" fill="#b8d0ea"/><path d="M17 17 L25 8 L27 10 L19.5 19 Z" fill="#6e6e6e"/><path d="M10 25 C10 20 13 17 17 17 L19.5 19.5 C19 23 15 25 10 25Z" fill="#3c7fc4"/><circle cx="16" cy="20.5" r="1.3" fill="#fff"/></svg>
<div class="a" style="left:733.70px;top:95px;font-size:10.1px;line-height:10.1px;color:#444444;font-weight:normal;font-style:normal;">Cell</div>
<div class="a" style="left:724.00px;top:109px;font-size:10.1px;line-height:10.1px;color:#444444;font-weight:normal;font-style:normal;">Styles</div>
<svg class="a" style="left:753.00px;top:110.50px" width="6" height="4" viewBox="0 0 6 4"><path d="M0.5 0.5 L3 3 L5.5 0.5" fill="none" stroke="#444" stroke-width="1.1"/></svg>
<div class="a" style="left:583.70px;width:200px;text-align:center;top:126px;font-size:10.3px;line-height:10.3px;color:#444444;font-weight:normal;font-style:normal;">Styles</div>
<div class="a" style="left:769.00px;top:59.70px;width:1.00px;height:73.30px;background:#bcbcbc;"></div>
<svg class="a" style="left:779.00px;top:61.00px" width="15" height="15" viewBox="0 0 15 15"><path d="M3.5 0.5 H9.5 V4.5 H3.5Z M0.5 9.5 H9.5 V13.5 H0.5Z M0.5 4.5 V9.5" fill="#fff" stroke="#8a8a8a"/><path d="M5 9.5 V13.5" stroke="#8a8a8a"/><path d="M6 5.5 H14.5 V8.5 H6" fill="none" stroke="#8a8a8a"/><path d="M9 7 H13" stroke="#3c7fc4" stroke-width="1"/><path d="M1 7 H7 M3.5 4.8 L1 7 L3.5 9.2" fill="none" stroke="#3c7fc4" stroke-width="1.3"/></svg>
<div class="a" style="left:796.00px;top:65px;font-size:10.0px;line-height:10.0px;color:#444444;font-weight:normal;font-style:normal;">Insert</div>
<svg class="a" style="left:834.70px;top:67.50px" width="6" height="4" viewBox="0 0 6 4"><path d="M0.5 0.5 L3 3 L5.5 0.5" fill="none" stroke="#444" stroke-width="1.1"/></svg>
<svg class="a" style="left:779.00px;top:81.00px" width="15" height="15" viewBox="0 0 15 15"><path d="M0.5 0.5 H9.5 V4.5 H0.5Z M0.5 9.5 H9.5 V13.5 H0.5Z" fill="#fff" stroke="#8a8a8a"/><path d="M5 9.5 V13.5 M5 0.5 V4.5" stroke="#8a8a8a"/><rect x="3.5" y="5" width="5" height="4" fill="#bcd3ee" stroke="#8a8a8a"/><path d="M9 3 L14 8.5 M14 3 L9 8.5" stroke="#e0562c" stroke-width="1.4"/></svg>
<div class="a" style="left:796.00px;top:85px;font-size:10.0px;line-height:10.0px;color:#444444;font-weight:normal;font-style:normal;">Delete</div>
<svg class="a" style="left:838.50px;top:88.00px" width="6" height="4" viewBox="0 0 6 4"><path d="M0.5 0.5 L3 3 L5.5 0.5" fill="none" stroke="#444" stroke-width="1.1"/></svg>
<svg class="a" style="left:779.00px;top:101.50px" width="15" height="15" viewBox="0 0 15 15"><path d="M0.5 2.5 H13.5 V13.5 H0.5Z M0.5 6 H13.5 M0.5 9.8 H13.5 M5 2.5 V13.5 M9.5 2.5 V13.5" fill="none" stroke="#8a8a8a"/><rect x="5" y="6" width="4.5" height="3.8" fill="#3c7fc4"/><path d="M0.5 0.5 V1.5 M13.5 0.5 V1.5 M1 1 H13" stroke="#3c7fc4" stroke-width="0.9"/></svg>
<div class="a" style="left:796.00px;top:105px;font-size:10.4px;line-height:10.4px;color:#444444;font-weight:normal;font-style:normal;">Format</div>
<svg class="a" style="left:832.80px;top:108.50px" width="6" height="4" viewBox="0 0 6 4"><path d="M0.5 0.5 L3 3 L5.5 0.5" fill="none" stroke="#444" stroke-width="1.1"/></svg>
<div class="a" style="left:713.50px;width:200px;text-align:center;top:126px;font-size:10.3px;line-height:10.3px;color:#444444;font-weight:normal;font-style:normal;">Cells</div>
<div class="a" style="left:858.00px;top:59.70px;width:1.00px;height:73.30px;background:#bcbcbc;"></div>
<svg class="a" style="left:869.00px;top:61.00px" width="14" height="14" viewBox="0 0 14 14"><path d="M1 1 H13 V3 M1 1 L7 7 L1 13 H13 V11" fill="none" stroke="#555" stroke-width="2"/></svg>
<svg class="a" style="left:893.00px;top:67.00px" width="6" height="4" viewBox="0 0 6 4"><path d="M0.5 0.5 L3 3 L5.5 0.5" fill="none" stroke="#444" stroke-width="1.1"/></svg>
<svg class="a" style="left:869.50px;top:81.80px" width="13" height="14" viewBox="0 0 13 14"><rect x="0.5" y="0.5" width="12" height="13" fill="#fff" stroke="#888"/><rect x="0.5" y="0.5" width="12" height="2" fill="#666"/><path d="M6.5 4 V11 M3.5 8 L6.5 11 L9.5 8" fill="none" stroke="#3c7fc4" stroke-width="1.4"/></svg>
<svg class="a" style="left:887.00px;top:88.50px" width="6" height="4" viewBox="0 0 6 4"><path d="M0.5 0.5 L3 3 L5.5 0.5" fill="none" stroke="#444" stroke-width="1.1"/></svg>
<svg class="a" style="left:869.50px;top:102.50px" width="12" height="12" viewBox="0 0 12 12"><path d="M1 8 L8 1 L11.5 4.5 L4.5 11.5Z" fill="#e58096"/><path d="M1 8 L3.5 5.5 L7 9 L4.5 11.5Z" fill="#f3b8c4"/><path d="M3 6 L6.5 9.5" stroke="#fff" stroke-width="0.8"/></svg>
<svg class="a" style="left:887.00px;top:108.50px" width="6" height="4" viewBox="0 0 6 4"><path d="M0.5 0.5 L3 3 L5.5 0.5" fill="none" stroke="#444" stroke-width="1.1"/></svg>
<svg class="a" style="left:911.00px;top:63.00px" width="27" height="24" viewBox="0 0 27 24"><text x="6" y="11.5" font-size="13" font-weight="bold" text-anchor="middle" fill="#3c7fc4" font-family="Liberation Sans">A</text><text x="6" y="23.5" font-size="12" font-weight="bold" text-anchor="middle" fill="#9b5bc6" font-family="Liberation Sans">Z</text><path d="M12 7 H26 L21 13 V20 H17 V13Z" fill="#777"/><path d="M14 8 L18 13 V19" fill="none" stroke="#c8c8c8" stroke-width="1"/></svg>
<svg class="a" style="left:951.00px;top:63.50px" width="25" height="24" viewBox="0 0 25 24"><circle cx="15.5" cy="8.5" r="7.2" fill="#fff" stroke="#3c7fc4" stroke-width="2"/><path d="M10.3 13.7 L2 22" stroke="#3c7fc4" stroke-width="3" stroke-linecap="round"/></svg>
<div class="a" style="left:910.30px;top:94px;font-size:10.6px;line-height:10.6px;color:#444444;font-weight:normal;font-style:normal;">Sort &amp;</div>
<div class="a" style="left:908.70px;top:109px;font-size:10.1px;line-height:10.1px;color:#444444;font-weight:normal;font-style:normal;">Filter</div>
<svg class="a" style="left:934.00px;top:110.50px" width="6" height="4" viewBox="0 0 6 4"><path d="M0.5 0.5 L3 3 L5.5 0.5" fill="none" stroke="#444" stroke-width="1.1"/></svg>
<div class="a" style="left:948.30px;top:94px;font-size:10.7px;line-height:10.7px;color:#444444;font-weight:normal;font-style:normal;">Find &amp;</div>
<div class="a" style="left:945.50px;top:109px;font-size:10.1px;line-height:10.1px;color:#444444;font-weight:normal;font-style:normal;">Select</div>
<svg class="a" style="left:975.50px;top:110.50px" width="6" height="4" viewBox="0 0 6 4"><path d="M0.5 0.5 L3 3 L5.5 0.5" fill="none" stroke="#444" stroke-width="1.1"/></svg>
<div class="a" style="left:824.50px;width:200px;text-align:center;top:126px;font-size:10.3px;line-height:10.3px;color:#444444;font-weight:normal;font-style:normal;">Editing</div>
<div class="a" style="left:991.00px;top:59.70px;width:1.00px;height:73.30px;background:#bcbcbc;"></div>
<div class="a" style="left:1013.6px;top:70.8px;width:8.8px;height:8.5px;border-radius:50%;background:#fe8a0b"></div>
<div class="a" style="left:1000.90px;top:94px;font-size:10.7px;line-height:10.7px;color:#444444;font-weight:normal;font-style:normal;">Add-ins</div>
<div class="a" style="left:919.00px;width:200px;text-align:center;top:126px;font-size:10.3px;line-height:10.3px;color:#444444;font-weight:normal;font-style:normal;">Add-ins</div>
<div class="a" style="left:1046.00px;top:59.70px;width:1.00px;height:73.30px;background:#bcbcbc;"></div>
<div class="a" style="left:1062.2px;top:61.6px;width:28px;height:27.7px;background:#2b2a29"></div>
<div class="a" style="left:1065.3px;top:66px;width:22px;height:19px;border-radius:50%;background:#fff;transform:rotate(-12deg)"></div>
<svg class="a" style="left:1066.00px;top:70.00px" width="22" height="10" viewBox="0 0 22 10"><text x="8.5" y="5.8" font-size="5.2" font-weight="bold" text-anchor="middle" fill="#444" font-family="Liberation Sans">GPT</text><text x="15.5" y="5.6" font-size="2.2" text-anchor="middle" fill="#777" font-family="Liberation Sans">FOR</text><text x="10.5" y="9" font-size="2.6" text-anchor="middle" fill="#777" font-family="Liberation Sans">EXCEL</text></svg>
<div class="a" style="left:1056.20px;top:94px;font-size:10.6px;line-height:10.6px;color:#444444;font-weight:normal;font-style:normal;letter-spacing:-0.45px">ChatGPT</div>
<div class="a" style="left:1056.90px;top:108px;font-size:10.1px;line-height:10.1px;color:#444444;font-weight:normal;font-style:normal;">for Excel</div>
<div class="a" style="left:976.00px;width:200px;text-align:center;top:126px;font-size:10.3px;line-height:10.3px;color:#444444;font-weight:normal;font-style:normal;">AI</div>
<div class="a" style="left:1105.00px;top:59.70px;width:1.00px;height:73.30px;background:#bcbcbc;"></div>
<svg class="a" style="left:1120.00px;top:62.00px" width="27" height="26" viewBox="0 0 27 26"><defs><linearGradient id="fb" x1="0" y1="1" x2="1" y2="0"><stop offset="0" stop-color="#083f8a"/><stop offset="1" stop-color="#1f9a80"/></linearGradient><linearGradient id="ff" x1="0" y1="1" x2="1" y2="0"><stop offset="0" stop-color="#1d7a6c"/><stop offset="0.5" stop-color="#8ff29a"/><stop offset="1" stop-color="#2fd0a8"/></linearGradient></defs><path d="M21 5.6 H22.7 C24.5 5.6 25.7 7 25.7 8.6 V20.7 C25.7 22.5 24.5 23.7 22.7 23.7 H6 L11 17 Z" fill="url(#fb)"/><path d="M1 11 C1 7.5 4.5 6.5 6.5 8 L10.5 11 L17 3.5 C19 1.5 22 2 22 5 V19 C22 21.5 19.5 21.5 18 20.3 L14.5 18 C12.5 16.8 11.5 17 9.5 19 L5 23.5 C3 25 1 24 1 22 Z" fill="url(#ff)"/></svg>
<div class="a" style="left:1115.20px;top:95px;font-size:10.0px;line-height:10.0px;color:#444444;font-weight:normal;font-style:normal;">Finance</div>
<div class="a" style="left:1032.50px;width:200px;text-align:center;top:126px;font-size:10.3px;line-height:10.3px;color:#444444;font-weight:normal;font-style:normal;">Add-in</div>
<div class="a" style="left:1159.00px;top:59.70px;width:1.00px;height:73.30px;background:#bcbcbc;"></div>
<svg class="a" style="left:1184.00px;top:129.00px" width="9" height="5" viewBox="0 0 9 5"><path d="M0.5 4.5 L4.5 0.5 L8.5 4.5" fill="none" stroke="#555" stroke-width="1.1"/></svg>
<div class="a" style="left:0.00px;top:138.00px;width:1200.00px;height:40.00px;background:#e6e6e6;"></div>
<div class="a" style="left:4.3px;top:147px;width:89.4px;height:22.5px;background:#fff;border:1px solid #d0d0d0"></div>
<div class="a" style="left:10.80px;top:154px;font-size:10.5px;line-height:10.5px;color:#3a3a3a;font-weight:normal;font-style:normal;">F1</div>
<svg class="a" style="left:81.50px;top:155.50px" width="6" height="4" viewBox="0 0 6 4"><path d="M0 0 H6 L3 3Z" fill="#555"/></svg>
<div class="a" style="left:106.40px;top:153.60px;width:1.80px;height:1.80px;background:#a0a0a0;"></div>
<div class="a" style="left:106.40px;top:157.30px;width:1.80px;height:1.80px;background:#a0a0a0;"></div>
<div class="a" style="left:106.40px;top:161.00px;width:1.80px;height:1.80px;background:#a0a0a0;"></div>
<div class="a" style="left:120.3px;top:147px;width:96.4px;height:22.5px;background:#fff;border:1px solid #d0d0d0"></div>
<svg class="a" style="left:132.00px;top:154.30px" width="10" height="9" viewBox="0 0 10 9"><path d="M0.5 0.5 L9.5 8.5 M9.5 0.5 L0.5 8.5" stroke="#b0b0b0" stroke-width="1.1"/></svg>
<svg class="a" style="left:163.00px;top:154.00px" width="12" height="9" viewBox="0 0 12 9"><path d="M0.5 4.5 L4 8 L11.5 0.5" fill="none" stroke="#b0b0b0" stroke-width="1.3"/></svg>
<div class="a" style="left:195.00px;top:152px;font-size:12.5px;line-height:12.5px;color:#555;font-weight:normal;font-style:normal;font-family:'Liberation Serif'"><i>f</i><i style='font-size:9px'>x</i></div>
<div class="a" style="left:219.7px;top:147px;width:976px;height:22.5px;background:#fff;border:1px solid #d0d0d0"></div>
<svg class="a" style="left:1185.00px;top:155.40px" width="7" height="4" viewBox="0 0 7 4"><path d="M0.5 0.5 L3.5 3.5 L6.5 0.5" fill="none" stroke="#555" stroke-width="1.2"/></svg>
<div class="a" style="left:0.00px;top:178.00px;width:1200.00px;height:452.00px;background:#ffffff;"></div>
<div class="a" style="left:0.00px;top:178.00px;width:1181.50px;height:17.60px;background:#e6e6e6;"></div>
<div class="a" style="left:1181.50px;top:178.00px;width:18.50px;height:452.00px;background:#e6e6e6;"></div>
<div class="a" style="left:0.00px;top:195.60px;width:22.00px;height:434.40px;background:#e6e6e6;"></div>
<svg class="a" style="left:9.00px;top:183.00px" width="11" height="11" viewBox="0 0 11 11"><path d="M10 0 V10 H0Z" fill="#b8b8b8"/></svg>
<div class="a" style="left:102.00px;top:195.60px;width:1.00px;height:434.40px;background:#dadada;"></div>
<div class="a" style="left:102.00px;top:178.50px;width:1.00px;height:17.00px;background:#c6c6c6;"></div>
<div class="a" style="left:172.00px;top:195.60px;width:1.00px;height:434.40px;background:#dadada;"></div>
<div class="a" style="left:172.00px;top:178.50px;width:1.00px;height:17.00px;background:#c6c6c6;"></div>
<div class="a" style="left:222.00px;top:195.60px;width:1.00px;height:434.40px;background:#dadada;"></div>
<div class="a" style="left:222.00px;top:178.50px;width:1.00px;height:17.00px;background:#c6c6c6;"></div>
<div class="a" style="left:299.00px;top:195.60px;width:1.00px;height:434.40px;background:#dadada;"></div>
<div class="a" style="left:299.00px;top:178.50px;width:1.00px;height:17.00px;background:#c6c6c6;"></div>
<div class="a" style="left:360.00px;top:195.60px;width:1.00px;height:434.40px;background:#dadada;"></div>
<div class="a" style="left:360.00px;top:178.50px;width:1.00px;height:17.00px;background:#c6c6c6;"></div>
<div class="a" style="left:416.00px;top:195.60px;width:1.00px;height:434.40px;background:#dadada;"></div>
<div class="a" style="left:416.00px;top:178.50px;width:1.00px;height:17.00px;background:#c6c6c6;"></div>
<div class="a" style="left:472.00px;top:195.60px;width:1.00px;height:434.40px;background:#dadada;"></div>
<div class="a" style="left:472.00px;top:178.50px;width:1.00px;height:17.00px;background:#c6c6c6;"></div>
<div class="a" style="left:529.00px;top:195.60px;width:1.00px;height:434.40px;background:#dadada;"></div>
<div class="a" style="left:529.00px;top:178.50px;width:1.00px;height:17.00px;background:#c6c6c6;"></div>
<div class="a" style="left:585.00px;top:195.60px;width:1.00px;height:434.40px;background:#dadada;"></div>
<div class="a" style="left:585.00px;top:178.50px;width:1.00px;height:17.00px;background:#c6c6c6;"></div>
<div class="a" style="left:641.00px;top:195.60px;width:1.00px;height:434.40px;background:#dadada;"></div>
<div class="a" style="left:641.00px;top:178.50px;width:1.00px;height:17.00px;background:#c6c6c6;"></div>
<div class="a" style="left:698.00px;top:195.60px;width:1.00px;height:434.40px;background:#dadada;"></div>
<div class="a" style="left:698.00px;top:178.50px;width:1.00px;height:17.00px;background:#c6c6c6;"></div>
<div class="a" style="left:754.00px;top:195.60px;width:1.00px;height:434.40px;background:#dadada;"></div>
<div class="a" style="left:754.00px;top:178.50px;width:1.00px;height:17.00px;background:#c6c6c6;"></div>
<div class="a" style="left:810.00px;top:195.60px;width:1.00px;height:434.40px;background:#dadada;"></div>
<div class="a" style="left:810.00px;top:178.50px;width:1.00px;height:17.00px;background:#c6c6c6;"></div>
<div class="a" style="left:866.00px;top:195.60px;width:1.00px;height:434.40px;background:#dadada;"></div>
<div class="a" style="left:866.00px;top:178.50px;width:1.00px;height:17.00px;background:#c6c6c6;"></div>
<div class="a" style="left:922.00px;top:195.60px;width:1.00px;height:434.40px;background:#dadada;"></div>
<div class="a" style="left:922.00px;top:178.50px;width:1.00px;height:17.00px;background:#c6c6c6;"></div>
<div class="a" style="left:979.00px;top:195.60px;width:1.00px;height:434.40px;background:#dadada;"></div>
<div class="a" style="left:979.00px;top:178.50px;width:1.00px;height:17.00px;background:#c6c6c6;"></div>
<div class="a" style="left:1035.00px;top:195.60px;width:1.00px;height:434.40px;background:#dadada;"></div>
<div class="a" style="left:1035.00px;top:178.50px;width:1.00px;height:17.00px;background:#c6c6c6;"></div>
<div class="a" style="left:1091.00px;top:195.60px;width:1.00px;height:434.40px;background:#dadada;"></div>
<div class="a" style="left:1091.00px;top:178.50px;width:1.00px;height:17.00px;background:#c6c6c6;"></div>
<div class="a" style="left:1148.00px;top:195.60px;width:1.00px;height:434.40px;background:#dadada;"></div>
<div class="a" style="left:1148.00px;top:178.50px;width:1.00px;height:17.00px;background:#c6c6c6;"></div>
<div class="a" style="left:22.00px;top:178.50px;width:1.00px;height:451.50px;background:#b0b0b0;"></div>
<div class="a" style="left:22.00px;top:195.00px;width:1159.50px;height:1.00px;background:#dadada;"></div>
<div class="a" style="left:0.00px;top:195.00px;width:22.00px;height:1.00px;background:#c6c6c6;"></div>
<div class="a" style="left:22.00px;top:213.00px;width:1159.50px;height:1.00px;background:#dadada;"></div>
<div class="a" style="left:0.00px;top:213.00px;width:22.00px;height:1.00px;background:#c6c6c6;"></div>
<div class="a" style="left:22.00px;top:230.00px;width:1159.50px;height:1.00px;background:#dadada;"></div>
<div class="a" style="left:0.00px;top:230.00px;width:22.00px;height:1.00px;background:#c6c6c6;"></div>
<div class="a" style="left:22.00px;top:248.00px;width:1159.50px;height:1.00px;background:#dadada;"></div>
<div class="a" style="left:0.00px;top:248.00px;width:22.00px;height:1.00px;background:#c6c6c6;"></div>
<div class="a" style="left:22.00px;top:265.00px;width:1159.50px;height:1.00px;background:#dadada;"></div>
<div class="a" style="left:0.00px;top:265.00px;width:22.00px;height:1.00px;background:#c6c6c6;"></div>
<div class="a" style="left:22.00px;top:283.00px;width:1159.50px;height:1.00px;background:#dadada;"></div>
<div class="a" style="left:0.00px;top:283.00px;width:22.00px;height:1.00px;background:#c6c6c6;"></div>
<div class="a" style="left:22.00px;top:301.00px;width:1159.50px;height:1.00px;background:#dadada;"></div>
<div class="a" style="left:0.00px;top:301.00px;width:22.00px;height:1.00px;background:#c6c6c6;"></div>
<div class="a" style="left:22.00px;top:318.00px;width:1159.50px;height:1.00px;background:#dadada;"></div>
<div class="a" style="left:0.00px;top:318.00px;width:22.00px;height:1.00px;background:#c6c6c6;"></div>
<div class="a" style="left:22.00px;top:336.00px;width:1159.50px;height:1.00px;background:#dadada;"></div>
<div class="a" style="left:0.00px;top:336.00px;width:22.00px;height:1.00px;background:#c6c6c6;"></div>
<div class="a" style="left:22.00px;top:353.00px;width:1159.50px;height:1.00px;background:#dadada;"></div>
<div class="a" style="left:0.00px;top:353.00px;width:22.00px;height:1.00px;background:#c6c6c6;"></div>
<div class="a" style="left:22.00px;top:371.00px;width:1159.50px;height:1.00px;background:#dadada;"></div>
<div class="a" style="left:0.00px;top:371.00px;width:22.00px;height:1.00px;background:#c6c6c6;"></div>
<div class="a" style="left:22.00px;top:388.00px;width:1159.50px;height:1.00px;background:#dadada;"></div>
<div class="a" style="left:0.00px;top:388.00px;width:22.00px;height:1.00px;background:#c6c6c6;"></div>
<div class="a" style="left:22.00px;top:406.00px;width:1159.50px;height:1.00px;background:#dadada;"></div>
<div class="a" style="left:0.00px;top:406.00px;width:22.00px;height:1.00px;background:#c6c6c6;"></div>
<div class="a" style="left:22.00px;top:424.00px;width:1159.50px;height:1.00px;background:#dadada;"></div>
<div class="a" style="left:0.00px;top:424.00px;width:22.00px;height:1.00px;background:#c6c6c6;"></div>
<div class="a" style="left:22.00px;top:441.00px;width:1159.50px;height:1.00px;background:#dadada;"></div>
<div class="a" style="left:0.00px;top:441.00px;width:22.00px;height:1.00px;background:#c6c6c6;"></div>
<div class="a" style="left:22.00px;top:459.00px;width:1159.50px;height:1.00px;background:#dadada;"></div>
<div class="a" style="left:0.00px;top:459.00px;width:22.00px;height:1.00px;background:#c6c6c6;"></div>
<div class="a" style="left:22.00px;top:476.00px;width:1159.50px;height:1.00px;background:#dadada;"></div>
<div class="a" style="left:0.00px;top:476.00px;width:22.00px;height:1.00px;background:#c6c6c6;"></div>
<div class="a" style="left:22.00px;top:494.00px;width:1159.50px;height:1.00px;background:#dadada;"></div>
<div class="a" style="left:0.00px;top:494.00px;width:22.00px;height:1.00px;background:#c6c6c6;"></div>
<div class="a" style="left:22.00px;top:511.00px;width:1159.50px;height:1.00px;background:#dadada;"></div>
<div class="a" style="left:0.00px;top:511.00px;width:22.00px;height:1.00px;background:#c6c6c6;"></div>
<div class="a" style="left:22.00px;top:529.00px;width:1159.50px;height:1.00px;background:#dadada;"></div>
<div class="a" style="left:0.00px;top:529.00px;width:22.00px;height:1.00px;background:#c6c6c6;"></div>
<div class="a" style="left:22.00px;top:546.00px;width:1159.50px;height:1.00px;background:#dadada;"></div>
<div class="a" style="left:0.00px;top:546.00px;width:22.00px;height:1.00px;background:#c6c6c6;"></div>
<div class="a" style="left:22.00px;top:564.00px;width:1159.50px;height:1.00px;background:#dadada;"></div>
<div class="a" style="left:0.00px;top:564.00px;width:22.00px;height:1.00px;background:#c6c6c6;"></div>
<div class="a" style="left:22.00px;top:582.00px;width:1159.50px;height:1.00px;background:#dadada;"></div>
<div class="a" style="left:0.00px;top:582.00px;width:22.00px;height:1.00px;background:#c6c6c6;"></div>
<div class="a" style="left:22.00px;top:599.00px;width:1159.50px;height:1.00px;background:#dadada;"></div>
<div class="a" style="left:0.00px;top:599.00px;width:22.00px;height:1.00px;background:#c6c6c6;"></div>
<div class="a" style="left:22.00px;top:617.00px;width:1159.50px;height:1.00px;background:#dadada;"></div>
<div class="a" style="left:0.00px;top:617.00px;width:22.00px;height:1.00px;background:#c6c6c6;"></div>
<div class="a" style="left:0.00px;top:195.00px;width:1181.50px;height:1.00px;background:#bdbdbd;"></div>
<div class="a" style="left:360.00px;top:178.30px;width:56.23px;height:17.30px;background:#d2d2d2;"></div>
<div class="a" style="left:360.00px;top:194.60px;width:56.23px;height:1.20px;background:#217346;"></div>
<div class="a" style="left:0.00px;top:195.60px;width:21.50px;height:17.57px;background:#d2d2d2;"></div>
<div class="a" style="left:21.00px;top:195.00px;width:2.00px;height:18.30px;background:#217346;"></div>
<div class="a" style="left:-37.80px;width:200px;text-align:center;top:182px;font-size:10.5px;line-height:10.5px;color:#444;font-weight:normal;font-style:normal;">A</div>
<div class="a" style="left:37.40px;width:200px;text-align:center;top:182px;font-size:10.5px;line-height:10.5px;color:#444;font-weight:normal;font-style:normal;">B</div>
<div class="a" style="left:96.95px;width:200px;text-align:center;top:182px;font-size:10.5px;line-height:10.5px;color:#444;font-weight:normal;font-style:normal;">C</div>
<div class="a" style="left:160.10px;width:200px;text-align:center;top:182px;font-size:10.5px;line-height:10.5px;color:#444;font-weight:normal;font-style:normal;">D</div>
<div class="a" style="left:229.35px;width:200px;text-align:center;top:182px;font-size:10.5px;line-height:10.5px;color:#444;font-weight:normal;font-style:normal;">E</div>
<div class="a" style="left:288.12px;width:200px;text-align:center;top:182px;font-size:10.5px;line-height:10.5px;color:#217346;font-weight:normal;font-style:normal;">F</div>
<div class="a" style="left:344.38px;width:200px;text-align:center;top:182px;font-size:10.5px;line-height:10.5px;color:#444;font-weight:normal;font-style:normal;">G</div>
<div class="a" style="left:400.62px;width:200px;text-align:center;top:182px;font-size:10.5px;line-height:10.5px;color:#444;font-weight:normal;font-style:normal;">H</div>
<div class="a" style="left:456.88px;width:200px;text-align:center;top:182px;font-size:10.5px;line-height:10.5px;color:#444;font-weight:normal;font-style:normal;">I</div>
<div class="a" style="left:513.12px;width:200px;text-align:center;top:182px;font-size:10.5px;line-height:10.5px;color:#444;font-weight:normal;font-style:normal;">J</div>
<div class="a" style="left:569.38px;width:200px;text-align:center;top:182px;font-size:10.5px;line-height:10.5px;color:#444;font-weight:normal;font-style:normal;">K</div>
<div class="a" style="left:625.62px;width:200px;text-align:center;top:182px;font-size:10.5px;line-height:10.5px;color:#444;font-weight:normal;font-style:normal;">L</div>
<div class="a" style="left:681.88px;width:200px;text-align:center;top:182px;font-size:10.5px;line-height:10.5px;color:#444;font-weight:normal;font-style:normal;">M</div>
<div class="a" style="left:738.12px;width:200px;text-align:center;top:182px;font-size:10.5px;line-height:10.5px;color:#444;font-weight:normal;font-style:normal;">N</div>
<div class="a" style="left:794.38px;width:200px;text-align:center;top:182px;font-size:10.5px;line-height:10.5px;color:#444;font-weight:normal;font-style:normal;">O</div>
<div class="a" style="left:850.62px;width:200px;text-align:center;top:182px;font-size:10.5px;line-height:10.5px;color:#444;font-weight:normal;font-style:normal;">P</div>
<div class="a" style="left:906.88px;width:200px;text-align:center;top:182px;font-size:10.5px;line-height:10.5px;color:#444;font-weight:normal;font-style:normal;">Q</div>
<div class="a" style="left:963.12px;width:200px;text-align:center;top:182px;font-size:10.5px;line-height:10.5px;color:#444;font-weight:normal;font-style:normal;">R</div>
<div class="a" style="left:1019.38px;width:200px;text-align:center;top:182px;font-size:10.5px;line-height:10.5px;color:#444;font-weight:normal;font-style:normal;">S</div>
<div class="a" style="left:1075.62px;width:200px;text-align:center;top:182px;font-size:10.5px;line-height:10.5px;color:#444;font-weight:normal;font-style:normal;">T</div>
<div class="a" style="left:1.2px;width:20.5px;text-align:center;top:200px;font-size:10.5px;line-height:10.5px;color:#217346">1</div>
<div class="a" style="left:1.2px;width:20.5px;text-align:center;top:217px;font-size:10.5px;line-height:10.5px;color:#444">2</div>
<div class="a" style="left:1.2px;width:20.5px;text-align:center;top:235px;font-size:10.5px;line-height:10.5px;color:#444">3</div>
<div class="a" style="left:1.2px;width:20.5px;text-align:center;top:253px;font-size:10.5px;line-height:10.5px;color:#444">4</div>
<div class="a" style="left:1.2px;width:20.5px;text-align:center;top:270px;font-size:10.5px;line-height:10.5px;color:#444">5</div>
<div class="a" style="left:1.2px;width:20.5px;text-align:center;top:288px;font-size:10.5px;line-height:10.5px;color:#444">6</div>
<div class="a" style="left:1.2px;width:20.5px;text-align:center;top:305px;font-size:10.5px;line-height:10.5px;color:#444">7</div>
<div class="a" style="left:1.2px;width:20.5px;text-align:center;top:323px;font-size:10.5px;line-height:10.5px;color:#444">8</div>
<div class="a" style="left:1.2px;width:20.5px;text-align:center;top:340px;font-size:10.5px;line-height:10.5px;color:#444">9</div>
<div class="a" style="left:1.2px;width:20.5px;text-align:center;top:358px;font-size:10.5px;line-height:10.5px;color:#444">10</div>
<div class="a" style="left:1.2px;width:20.5px;text-align:center;top:376px;font-size:10.5px;line-height:10.5px;color:#444">11</div>
<div class="a" style="left:1.2px;width:20.5px;text-align:center;top:393px;font-size:10.5px;line-height:10.5px;color:#444">12</div>
<div class="a" style="left:1.2px;width:20.5px;text-align:center;top:411px;font-size:10.5px;line-height:10.5px;color:#444">13</div>
<div class="a" style="left:1.2px;width:20.5px;text-align:center;top:428px;font-size:10.5px;line-height:10.5px;color:#444">14</div>
<div class="a" style="left:1.2px;width:20.5px;text-align:center;top:446px;font-size:10.5px;line-height:10.5px;color:#444">15</div>
<div class="a" style="left:1.2px;width:20.5px;text-align:center;top:463px;font-size:10.5px;line-height:10.5px;color:#444">16</div>
<div class="a" style="left:1.2px;width:20.5px;text-align:center;top:481px;font-size:10.5px;line-height:10.5px;color:#444">17</div>
<div class="a" style="left:1.2px;width:20.5px;text-align:center;top:499px;font-size:10.5px;line-height:10.5px;color:#444">18</div>
<div class="a" style="left:1.2px;width:20.5px;text-align:center;top:516px;font-size:10.5px;line-height:10.5px;color:#444">19</div>
<div class="a" style="left:1.2px;width:20.5px;text-align:center;top:534px;font-size:10.5px;line-height:10.5px;color:#444">20</div>
<div class="a" style="left:1.2px;width:20.5px;text-align:center;top:551px;font-size:10.5px;line-height:10.5px;color:#444">21</div>
<div class="a" style="left:1.2px;width:20.5px;text-align:center;top:569px;font-size:10.5px;line-height:10.5px;color:#444">22</div>
<div class="a" style="left:1.2px;width:20.5px;text-align:center;top:586px;font-size:10.5px;line-height:10.5px;color:#444">23</div>
<div class="a" style="left:1.2px;width:20.5px;text-align:center;top:604px;font-size:10.5px;line-height:10.5px;color:#444">24</div>
<div class="a" style="left:1.2px;width:20.5px;text-align:center;top:622px;font-size:10.5px;line-height:10.5px;color:#444">25</div>
<div class="a" style="left:23.00px;top:195.60px;width:337.00px;height:17.57px;background:#ededed;"></div>
<div class="a" style="left:223.10px;top:214.87px;width:44.28px;height:14.17px;background:#ffb628;"></div>
<div class="a" style="left:102.40px;top:230.74px;width:70.00px;height:17.57px;background:#ffeb9c;"></div>
<div class="a" style="left:223.10px;top:232.44px;width:59.04px;height:14.17px;background:#ffb628;"></div>
<div class="a" style="left:223.10px;top:250.01px;width:64.58px;height:14.17px;background:#ffb628;"></div>
<div class="a" style="left:172.40px;top:265.88px;width:49.10px;height:17.57px;background:#9bc2e6;"></div>
<div class="a" style="left:223.10px;top:267.58px;width:49.81px;height:14.17px;background:#ffb628;"></div>
<div class="a" style="left:22.00px;top:283.45px;width:80.40px;height:17.57px;background:#ffc7ce;"></div>
<div class="a" style="left:172.40px;top:283.45px;width:49.10px;height:17.57px;background:#9bc2e6;"></div>
<div class="a" style="left:223.10px;top:285.15px;width:60.88px;height:14.17px;background:#ffb628;"></div>
<div class="a" style="left:22.00px;top:301.02px;width:80.40px;height:17.57px;background:#ffc7ce;"></div>
<div class="a" style="left:102.40px;top:301.02px;width:70.00px;height:17.57px;background:#ffeb9c;"></div>
<div class="a" style="left:223.10px;top:302.72px;width:51.66px;height:14.17px;background:#ffb628;"></div>
<div class="a" style="left:102.40px;top:318.59px;width:70.00px;height:17.57px;background:#ffeb9c;"></div>
<div class="a" style="left:172.40px;top:318.59px;width:49.10px;height:17.57px;background:#9bc2e6;"></div>
<div class="a" style="left:223.10px;top:320.29px;width:64.58px;height:14.17px;background:#ffb628;"></div>
<div class="a" style="left:22.00px;top:336.16px;width:80.40px;height:17.57px;background:#ffc7ce;"></div>
<div class="a" style="left:172.40px;top:336.16px;width:49.10px;height:17.57px;background:#9bc2e6;"></div>
<div class="a" style="left:223.10px;top:337.86px;width:64.58px;height:14.17px;background:#ffb628;"></div>
<div class="a" style="left:223.10px;top:355.43px;width:74.00px;height:14.17px;background:#ffb628;"></div>
<div class="a" style="left:102.40px;top:371.30px;width:70.00px;height:17.57px;background:#ffeb9c;"></div>
<div class="a" style="left:223.10px;top:373.00px;width:49.81px;height:14.17px;background:#ffb628;"></div>
<div class="a" style="left:102.40px;top:388.87px;width:70.00px;height:17.57px;background:#ffeb9c;"></div>
<div class="a" style="left:172.40px;top:388.87px;width:49.10px;height:17.57px;background:#9bc2e6;"></div>
<div class="a" style="left:223.10px;top:390.57px;width:47.97px;height:14.17px;background:#ffb628;"></div>
<div class="a" style="left:172.40px;top:406.43px;width:49.10px;height:17.57px;background:#9bc2e6;"></div>
<div class="a" style="left:223.10px;top:408.13px;width:53.51px;height:14.17px;background:#ffb628;"></div>
<div class="a" style="left:172.40px;top:424.00px;width:49.10px;height:17.57px;background:#9bc2e6;"></div>
<div class="a" style="left:223.10px;top:425.70px;width:60.88px;height:14.17px;background:#ffb628;"></div>
<div class="a" style="left:172.40px;top:441.57px;width:49.10px;height:17.57px;background:#9bc2e6;"></div>
<div class="a" style="left:223.10px;top:443.27px;width:55.35px;height:14.17px;background:#ffb628;"></div>
<div class="a" style="left:223.10px;top:460.84px;width:74.00px;height:14.17px;background:#ffb628;"></div>
<div class="a" style="left:22.00px;top:476.71px;width:80.40px;height:17.57px;background:#ffc7ce;"></div>
<div class="a" style="left:102.40px;top:476.71px;width:70.00px;height:17.57px;background:#ffeb9c;"></div>
<div class="a" style="left:223.10px;top:478.41px;width:57.20px;height:14.17px;background:#ffb628;"></div>
<div class="a" style="left:102.40px;top:494.28px;width:70.00px;height:17.57px;background:#ffeb9c;"></div>
<div class="a" style="left:172.40px;top:494.28px;width:49.10px;height:17.57px;background:#9bc2e6;"></div>
<div class="a" style="left:223.10px;top:495.98px;width:55.35px;height:14.17px;background:#ffb628;"></div>
<div class="a" style="left:102.40px;top:511.85px;width:70.00px;height:17.57px;background:#ffeb9c;"></div>
<div class="a" style="left:172.40px;top:511.85px;width:49.10px;height:17.57px;background:#9bc2e6;"></div>
<div class="a" style="left:223.10px;top:513.55px;width:49.81px;height:14.17px;background:#ffb628;"></div>
<div class="a" style="left:223.10px;top:531.12px;width:49.81px;height:14.17px;background:#ffb628;"></div>
<div class="a" style="left:298.70px;top:529.42px;width:61.30px;height:17.57px;background:#c6efce;"></div>
<div class="a" style="left:223.10px;top:548.69px;width:53.51px;height:14.17px;background:#ffb628;"></div>
<div class="a" style="left:172.40px;top:564.56px;width:49.10px;height:17.57px;background:#9bc2e6;"></div>
<div class="a" style="left:223.10px;top:566.26px;width:57.20px;height:14.17px;background:#ffb628;"></div>
<div class="a" style="left:172.40px;top:582.13px;width:49.10px;height:17.57px;background:#9bc2e6;"></div>
<div class="a" style="left:223.10px;top:583.83px;width:60.88px;height:14.17px;background:#ffb628;"></div>
<div class="a" style="left:102.40px;top:599.70px;width:70.00px;height:17.57px;background:#ffeb9c;"></div>
<div class="a" style="left:172.40px;top:599.70px;width:49.10px;height:17.57px;background:#9bc2e6;"></div>
<div class="a" style="left:223.10px;top:601.40px;width:74.00px;height:14.17px;background:#ffb628;"></div>
<div class="a" style="left:22.00px;top:195.00px;width:338.00px;height:1.00px;background:#bdbdbd;"></div>
<div class="a" style="left:22.00px;top:212.00px;width:338.00px;height:2.00px;background:#555;"></div>
<div class="a" style="left:22.00px;top:230.00px;width:338.00px;height:1.00px;background:#333;"></div>
<div class="a" style="left:22.00px;top:248.00px;width:338.00px;height:1.00px;background:#333;"></div>
<div class="a" style="left:22.00px;top:265.00px;width:338.00px;height:1.00px;background:#333;"></div>
<div class="a" style="left:22.00px;top:283.00px;width:338.00px;height:1.00px;background:#333;"></div>
<div class="a" style="left:22.00px;top:301.00px;width:338.00px;height:1.00px;background:#333;"></div>
<div class="a" style="left:22.00px;top:318.00px;width:338.00px;height:1.00px;background:#333;"></div>
<div class="a" style="left:22.00px;top:336.00px;width:338.00px;height:1.00px;background:#333;"></div>
<div class="a" style="left:22.00px;top:353.00px;width:338.00px;height:1.00px;background:#333;"></div>
<div class="a" style="left:22.00px;top:371.00px;width:338.00px;height:1.00px;background:#333;"></div>
<div class="a" style="left:22.00px;top:388.00px;width:338.00px;height:1.00px;background:#333;"></div>
<div class="a" style="left:22.00px;top:406.00px;width:338.00px;height:1.00px;background:#333;"></div>
<div class="a" style="left:22.00px;top:424.00px;width:338.00px;height:1.00px;background:#333;"></div>
<div class="a" style="left:22.00px;top:441.00px;width:338.00px;height:1.00px;background:#333;"></div>
<div class="a" style="left:22.00px;top:459.00px;width:338.00px;height:1.00px;background:#333;"></div>
<div class="a" style="left:22.00px;top:476.00px;width:338.00px;height:1.00px;background:#333;"></div>
<div class="a" style="left:22.00px;top:494.00px;width:338.00px;height:1.00px;background:#333;"></div>
<div class="a" style="left:22.00px;top:511.00px;width:338.00px;height:1.00px;background:#333;"></div>
<div class="a" style="left:22.00px;top:529.00px;width:338.00px;height:1.00px;background:#333;"></div>
<div class="a" style="left:22.00px;top:546.00px;width:338.00px;height:1.00px;background:#333;"></div>
<div class="a" style="left:22.00px;top:564.00px;width:338.00px;height:1.00px;background:#333;"></div>
<div class="a" style="left:22.00px;top:582.00px;width:338.00px;height:1.00px;background:#333;"></div>
<div class="a" style="left:22.00px;top:599.00px;width:338.00px;height:1.00px;background:#333;"></div>
<div class="a" style="left:22.00px;top:617.00px;width:338.00px;height:1.00px;background:#333;"></div>
<div class="a" style="left:102.00px;top:195.60px;width:1.00px;height:421.67px;background:#333;"></div>
<div class="a" style="left:172.00px;top:195.60px;width:1.00px;height:421.67px;background:#333;"></div>
<div class="a" style="left:221.00px;top:195.60px;width:1.00px;height:421.67px;background:#333;"></div>
<div class="a" style="left:298.00px;top:195.60px;width:1.00px;height:421.67px;background:#333;"></div>
<div class="a" style="left:360.00px;top:195.60px;width:1.00px;height:421.67px;background:#333;"></div>
<div class="a" style="left:22.00px;top:213.17px;width:1.00px;height:416.83px;background:#ababab;"></div>
<div class="a" style="left:26.70px;top:200px;font-size:11.5px;line-height:11.5px;color:#000;font-weight:bold;font-style:italic;">Candidate ID</div>
<div class="a" style="left:104.00px;top:200px;font-size:11.5px;line-height:11.5px;color:#000;font-weight:bold;font-style:italic;letter-spacing:-0.13px">Area</div>
<div class="a" style="left:96.95px;width:200px;text-align:center;top:200px;font-size:11.5px;line-height:11.5px;color:#000;font-weight:bold;font-style:italic;letter-spacing:-0.38px">Gender</div>
<div class="a" style="left:160.10px;width:200px;text-align:center;top:200px;font-size:11.5px;line-height:11.5px;color:#000;font-weight:bold;font-style:italic;letter-spacing:-0.62px">Age</div>
<div class="a" style="left:298.7px;width:58.350000000000016px;text-align:right;top:200px;font-size:11.5px;line-height:11.5px;letter-spacing:-0.55px;color:#000;font-weight:bold;font-style:italic">Result</div>
<div class="a" style="left:-37.80px;width:200px;text-align:center;top:218px;font-size:10.8px;line-height:10.8px;color:#000;font-weight:normal;font-style:normal;">980748</div>
<div class="a" style="left:104.30px;top:218px;font-size:10.8px;line-height:10.8px;color:#000;font-weight:normal;font-style:normal;transform:scaleX(1.224);transform-origin:0 0">North</div>
<div class="a" style="left:96.95px;width:200px;text-align:center;top:218px;font-size:10.8px;line-height:10.8px;color:#000;font-weight:normal;font-style:normal;">M</div>
<div class="a" style="left:160.10px;width:200px;text-align:center;top:218px;font-size:10.8px;line-height:10.8px;color:#000;font-weight:normal;font-style:normal;">24</div>
<div class="a" style="left:298.7px;width:59.17500000000001px;text-align:right;top:218px;font-size:10.8px;line-height:10.8px;letter-spacing:0.275px;color:#000">87.0%</div>
<div class="a" style="left:-37.80px;width:200px;text-align:center;top:236px;font-size:10.8px;line-height:10.8px;color:#000;font-weight:normal;font-style:normal;">379829</div>
<div class="a" style="left:104.30px;top:236px;font-size:10.8px;line-height:10.8px;color:#9c5700;font-weight:normal;font-style:normal;transform:scaleX(1.081132075471698);transform-origin:0 0">South-East</div>
<div class="a" style="left:96.95px;width:200px;text-align:center;top:236px;font-size:10.8px;line-height:10.8px;color:#000;font-weight:normal;font-style:normal;">M</div>
<div class="a" style="left:160.10px;width:200px;text-align:center;top:236px;font-size:10.8px;line-height:10.8px;color:#000;font-weight:normal;font-style:normal;">32</div>
<div class="a" style="left:298.7px;width:59.17500000000001px;text-align:right;top:236px;font-size:10.8px;line-height:10.8px;letter-spacing:0.275px;color:#000">55.0%</div>
<div class="a" style="left:-37.80px;width:200px;text-align:center;top:253px;font-size:10.8px;line-height:10.8px;color:#000;font-weight:normal;font-style:normal;">838293</div>
<div class="a" style="left:104.30px;top:253px;font-size:10.8px;line-height:10.8px;color:#000;font-weight:normal;font-style:normal;transform:scaleX(1.1785714285714286);transform-origin:0 0">Midlands</div>
<div class="a" style="left:96.95px;width:200px;text-align:center;top:253px;font-size:10.8px;line-height:10.8px;color:#000;font-weight:normal;font-style:normal;">M</div>
<div class="a" style="left:160.10px;width:200px;text-align:center;top:253px;font-size:10.8px;line-height:10.8px;color:#000;font-weight:normal;font-style:normal;">35</div>
<div class="a" style="left:298.7px;width:59.17500000000001px;text-align:right;top:253px;font-size:10.8px;line-height:10.8px;letter-spacing:0.275px;color:#000">98.0%</div>
<div class="a" style="left:-37.80px;width:200px;text-align:center;top:271px;font-size:10.8px;line-height:10.8px;color:#000;font-weight:normal;font-style:normal;">384953</div>
<div class="a" style="left:104.30px;top:271px;font-size:10.8px;line-height:10.8px;color:#000;font-weight:normal;font-style:normal;transform:scaleX(1.1785714285714286);transform-origin:0 0">Midlands</div>
<div class="a" style="left:96.95px;width:200px;text-align:center;top:271px;font-size:10.8px;line-height:10.8px;color:#000;font-weight:normal;font-style:normal;">F</div>
<div class="a" style="left:160.10px;width:200px;text-align:center;top:271px;font-size:10.8px;line-height:10.8px;color:#000;font-weight:normal;font-style:normal;">27</div>
<div class="a" style="left:298.7px;width:59.17500000000001px;text-align:right;top:271px;font-size:10.8px;line-height:10.8px;letter-spacing:0.275px;color:#000">93.0%</div>
<div class="a" style="left:-37.80px;width:200px;text-align:center;top:288px;font-size:10.8px;line-height:10.8px;color:#9c0006;font-weight:normal;font-style:normal;">234242</div>
<div class="a" style="left:104.30px;top:288px;font-size:10.8px;line-height:10.8px;color:#000;font-weight:normal;font-style:normal;transform:scaleX(1.224);transform-origin:0 0">North</div>
<div class="a" style="left:96.95px;width:200px;text-align:center;top:288px;font-size:10.8px;line-height:10.8px;color:#000;font-weight:normal;font-style:normal;">F</div>
<div class="a" style="left:160.10px;width:200px;text-align:center;top:288px;font-size:10.8px;line-height:10.8px;color:#000;font-weight:normal;font-style:normal;">33</div>
<div class="a" style="left:298.7px;width:59.17500000000001px;text-align:right;top:288px;font-size:10.8px;line-height:10.8px;letter-spacing:0.275px;color:#000">78.0%</div>
<div class="a" style="left:-37.80px;width:200px;text-align:center;top:306px;font-size:10.8px;line-height:10.8px;color:#9c0006;font-weight:normal;font-style:normal;">234625</div>
<div class="a" style="left:104.30px;top:306px;font-size:10.8px;line-height:10.8px;color:#9c5700;font-weight:normal;font-style:normal;transform:scaleX(1.1636363636363636);transform-origin:0 0">South-West</div>
<div class="a" style="left:96.95px;width:200px;text-align:center;top:306px;font-size:10.8px;line-height:10.8px;color:#000;font-weight:normal;font-style:normal;">M</div>
<div class="a" style="left:160.10px;width:200px;text-align:center;top:306px;font-size:10.8px;line-height:10.8px;color:#000;font-weight:normal;font-style:normal;">28</div>
<div class="a" style="left:298.7px;width:59.17500000000001px;text-align:right;top:306px;font-size:10.8px;line-height:10.8px;letter-spacing:0.275px;color:#000">77.0%</div>
<div class="a" style="left:-37.80px;width:200px;text-align:center;top:323px;font-size:10.8px;line-height:10.8px;color:#000;font-weight:normal;font-style:normal;">546175</div>
<div class="a" style="left:104.30px;top:323px;font-size:10.8px;line-height:10.8px;color:#9c5700;font-weight:normal;font-style:normal;transform:scaleX(1.081132075471698);transform-origin:0 0">South-East</div>
<div class="a" style="left:96.95px;width:200px;text-align:center;top:323px;font-size:10.8px;line-height:10.8px;color:#000;font-weight:normal;font-style:normal;">F</div>
<div class="a" style="left:160.10px;width:200px;text-align:center;top:323px;font-size:10.8px;line-height:10.8px;color:#000;font-weight:normal;font-style:normal;">35</div>
<div class="a" style="left:298.7px;width:59.17500000000001px;text-align:right;top:323px;font-size:10.8px;line-height:10.8px;letter-spacing:0.275px;color:#000">73.0%</div>
<div class="a" style="left:-37.80px;width:200px;text-align:center;top:341px;font-size:10.8px;line-height:10.8px;color:#9c0006;font-weight:normal;font-style:normal;">185675</div>
<div class="a" style="left:104.30px;top:341px;font-size:10.8px;line-height:10.8px;color:#000;font-weight:normal;font-style:normal;transform:scaleX(1.1073170731707316);transform-origin:0 0">Scotland</div>
<div class="a" style="left:96.95px;width:200px;text-align:center;top:341px;font-size:10.8px;line-height:10.8px;color:#000;font-weight:normal;font-style:normal;">F</div>
<div class="a" style="left:160.10px;width:200px;text-align:center;top:341px;font-size:10.8px;line-height:10.8px;color:#000;font-weight:normal;font-style:normal;">35</div>
<div class="a" style="left:298.7px;width:59.17500000000001px;text-align:right;top:341px;font-size:10.8px;line-height:10.8px;letter-spacing:0.275px;color:#000">55.0%</div>
<div class="a" style="left:-37.80px;width:200px;text-align:center;top:359px;font-size:10.8px;line-height:10.8px;color:#000;font-weight:normal;font-style:normal;">456546</div>
<div class="a" style="left:104.30px;top:359px;font-size:10.8px;line-height:10.8px;color:#000;font-weight:normal;font-style:normal;transform:scaleX(1.224);transform-origin:0 0">North</div>
<div class="a" style="left:96.95px;width:200px;text-align:center;top:359px;font-size:10.8px;line-height:10.8px;color:#000;font-weight:normal;font-style:normal;">M</div>
<div class="a" style="left:160.10px;width:200px;text-align:center;top:359px;font-size:10.8px;line-height:10.8px;color:#000;font-weight:normal;font-style:normal;">42</div>
<div class="a" style="left:298.7px;width:59.17500000000001px;text-align:right;top:359px;font-size:10.8px;line-height:10.8px;letter-spacing:0.275px;color:#000">73.0%</div>
<div class="a" style="left:-37.80px;width:200px;text-align:center;top:376px;font-size:10.8px;line-height:10.8px;color:#000;font-weight:normal;font-style:normal;">465464</div>
<div class="a" style="left:104.30px;top:376px;font-size:10.8px;line-height:10.8px;color:#9c5700;font-weight:normal;font-style:normal;transform:scaleX(1.081132075471698);transform-origin:0 0">South-East</div>
<div class="a" style="left:96.95px;width:200px;text-align:center;top:376px;font-size:10.8px;line-height:10.8px;color:#000;font-weight:normal;font-style:normal;">M</div>
<div class="a" style="left:160.10px;width:200px;text-align:center;top:376px;font-size:10.8px;line-height:10.8px;color:#000;font-weight:normal;font-style:normal;">27</div>
<div class="a" style="left:298.7px;width:59.17500000000001px;text-align:right;top:376px;font-size:10.8px;line-height:10.8px;letter-spacing:0.275px;color:#000">69.0%</div>
<div class="a" style="left:-37.80px;width:200px;text-align:center;top:394px;font-size:10.8px;line-height:10.8px;color:#000;font-weight:normal;font-style:normal;">745644</div>
<div class="a" style="left:104.30px;top:394px;font-size:10.8px;line-height:10.8px;color:#9c5700;font-weight:normal;font-style:normal;transform:scaleX(1.081132075471698);transform-origin:0 0">South-East</div>
<div class="a" style="left:96.95px;width:200px;text-align:center;top:394px;font-size:10.8px;line-height:10.8px;color:#000;font-weight:normal;font-style:normal;">F</div>
<div class="a" style="left:160.10px;width:200px;text-align:center;top:394px;font-size:10.8px;line-height:10.8px;color:#000;font-weight:normal;font-style:normal;">26</div>
<div class="a" style="left:298.7px;width:59.17500000000001px;text-align:right;top:394px;font-size:10.8px;line-height:10.8px;letter-spacing:0.275px;color:#000">38.0%</div>
<div class="a" style="left:-37.80px;width:200px;text-align:center;top:411px;font-size:10.8px;line-height:10.8px;color:#000;font-weight:normal;font-style:normal;">641645</div>
<div class="a" style="left:104.30px;top:411px;font-size:10.8px;line-height:10.8px;color:#000;font-weight:normal;font-style:normal;transform:scaleX(1.1073170731707316);transform-origin:0 0">Scotland</div>
<div class="a" style="left:96.95px;width:200px;text-align:center;top:411px;font-size:10.8px;line-height:10.8px;color:#000;font-weight:normal;font-style:normal;">F</div>
<div class="a" style="left:160.10px;width:200px;text-align:center;top:411px;font-size:10.8px;line-height:10.8px;color:#000;font-weight:normal;font-style:normal;">29</div>
<div class="a" style="left:298.7px;width:59.17500000000001px;text-align:right;top:411px;font-size:10.8px;line-height:10.8px;letter-spacing:0.275px;color:#000">97.0%</div>
<div class="a" style="left:-37.80px;width:200px;text-align:center;top:429px;font-size:10.8px;line-height:10.8px;color:#000;font-weight:normal;font-style:normal;">727654</div>
<div class="a" style="left:104.30px;top:429px;font-size:10.8px;line-height:10.8px;color:#000;font-weight:normal;font-style:normal;transform:scaleX(1.1785714285714286);transform-origin:0 0">Midlands</div>
<div class="a" style="left:96.95px;width:200px;text-align:center;top:429px;font-size:10.8px;line-height:10.8px;color:#000;font-weight:normal;font-style:normal;">F</div>
<div class="a" style="left:160.10px;width:200px;text-align:center;top:429px;font-size:10.8px;line-height:10.8px;color:#000;font-weight:normal;font-style:normal;">33</div>
<div class="a" style="left:298.7px;width:59.17500000000001px;text-align:right;top:429px;font-size:10.8px;line-height:10.8px;letter-spacing:0.275px;color:#000">89.0%</div>
<div class="a" style="left:-37.80px;width:200px;text-align:center;top:446px;font-size:10.8px;line-height:10.8px;color:#000;font-weight:normal;font-style:normal;">345634</div>
<div class="a" style="left:104.30px;top:446px;font-size:10.8px;line-height:10.8px;color:#000;font-weight:normal;font-style:normal;transform:scaleX(1.224);transform-origin:0 0">North</div>
<div class="a" style="left:96.95px;width:200px;text-align:center;top:446px;font-size:10.8px;line-height:10.8px;color:#000;font-weight:normal;font-style:normal;">F</div>
<div class="a" style="left:160.10px;width:200px;text-align:center;top:446px;font-size:10.8px;line-height:10.8px;color:#000;font-weight:normal;font-style:normal;">30</div>
<div class="a" style="left:298.7px;width:59.17500000000001px;text-align:right;top:446px;font-size:10.8px;line-height:10.8px;letter-spacing:0.275px;color:#000">77.0%</div>
<div class="a" style="left:-37.80px;width:200px;text-align:center;top:464px;font-size:10.8px;line-height:10.8px;color:#000;font-weight:normal;font-style:normal;">457465</div>
<div class="a" style="left:104.30px;top:464px;font-size:10.8px;line-height:10.8px;color:#000;font-weight:normal;font-style:normal;transform:scaleX(1.224);transform-origin:0 0">North</div>
<div class="a" style="left:96.95px;width:200px;text-align:center;top:464px;font-size:10.8px;line-height:10.8px;color:#000;font-weight:normal;font-style:normal;">M</div>
<div class="a" style="left:160.10px;width:200px;text-align:center;top:464px;font-size:10.8px;line-height:10.8px;color:#000;font-weight:normal;font-style:normal;">45</div>
<div class="a" style="left:298.7px;width:59.17500000000001px;text-align:right;top:464px;font-size:10.8px;line-height:10.8px;letter-spacing:0.275px;color:#000">58.0%</div>
<div class="a" style="left:-37.80px;width:200px;text-align:center;top:482px;font-size:10.8px;line-height:10.8px;color:#9c0006;font-weight:normal;font-style:normal;">115465</div>
<div class="a" style="left:104.30px;top:482px;font-size:10.8px;line-height:10.8px;color:#9c5700;font-weight:normal;font-style:normal;transform:scaleX(1.1636363636363636);transform-origin:0 0">South-West</div>
<div class="a" style="left:96.95px;width:200px;text-align:center;top:482px;font-size:10.8px;line-height:10.8px;color:#000;font-weight:normal;font-style:normal;">M</div>
<div class="a" style="left:160.10px;width:200px;text-align:center;top:482px;font-size:10.8px;line-height:10.8px;color:#000;font-weight:normal;font-style:normal;">31</div>
<div class="a" style="left:298.7px;width:59.17500000000001px;text-align:right;top:482px;font-size:10.8px;line-height:10.8px;letter-spacing:0.275px;color:#000">61.0%</div>
<div class="a" style="left:-37.80px;width:200px;text-align:center;top:499px;font-size:10.8px;line-height:10.8px;color:#000;font-weight:normal;font-style:normal;">345464</div>
<div class="a" style="left:104.30px;top:499px;font-size:10.8px;line-height:10.8px;color:#9c5700;font-weight:normal;font-style:normal;transform:scaleX(1.081132075471698);transform-origin:0 0">South-East</div>
<div class="a" style="left:96.95px;width:200px;text-align:center;top:499px;font-size:10.8px;line-height:10.8px;color:#000;font-weight:normal;font-style:normal;">F</div>
<div class="a" style="left:160.10px;width:200px;text-align:center;top:499px;font-size:10.8px;line-height:10.8px;color:#000;font-weight:normal;font-style:normal;">30</div>
<div class="a" style="left:298.7px;width:59.17500000000001px;text-align:right;top:499px;font-size:10.8px;line-height:10.8px;letter-spacing:0.275px;color:#000">67.0%</div>
<div class="a" style="left:-37.80px;width:200px;text-align:center;top:517px;font-size:10.8px;line-height:10.8px;color:#000;font-weight:normal;font-style:normal;">896667</div>
<div class="a" style="left:104.30px;top:517px;font-size:10.8px;line-height:10.8px;color:#9c5700;font-weight:normal;font-style:normal;transform:scaleX(1.081132075471698);transform-origin:0 0">South-East</div>
<div class="a" style="left:96.95px;width:200px;text-align:center;top:517px;font-size:10.8px;line-height:10.8px;color:#000;font-weight:normal;font-style:normal;">F</div>
<div class="a" style="left:160.10px;width:200px;text-align:center;top:517px;font-size:10.8px;line-height:10.8px;color:#000;font-weight:normal;font-style:normal;">27</div>
<div class="a" style="left:298.7px;width:59.17500000000001px;text-align:right;top:517px;font-size:10.8px;line-height:10.8px;letter-spacing:0.275px;color:#000">58.0%</div>
<div class="a" style="left:-37.80px;width:200px;text-align:center;top:534px;font-size:10.8px;line-height:10.8px;color:#000;font-weight:normal;font-style:normal;">654745</div>
<div class="a" style="left:104.30px;top:534px;font-size:10.8px;line-height:10.8px;color:#000;font-weight:normal;font-style:normal;transform:scaleX(1.1073170731707316);transform-origin:0 0">Scotland</div>
<div class="a" style="left:96.95px;width:200px;text-align:center;top:534px;font-size:10.8px;line-height:10.8px;color:#000;font-weight:normal;font-style:normal;">M</div>
<div class="a" style="left:160.10px;width:200px;text-align:center;top:534px;font-size:10.8px;line-height:10.8px;color:#000;font-weight:normal;font-style:normal;">27</div>
<div class="a" style="left:298.7px;width:59.17500000000001px;text-align:right;top:534px;font-size:10.8px;line-height:10.8px;letter-spacing:0.275px;color:#006100">99.0%</div>
<div class="a" style="left:-37.80px;width:200px;text-align:center;top:552px;font-size:10.8px;line-height:10.8px;color:#000;font-weight:normal;font-style:normal;">568545</div>
<div class="a" style="left:104.30px;top:552px;font-size:10.8px;line-height:10.8px;color:#000;font-weight:normal;font-style:normal;transform:scaleX(1.1785714285714286);transform-origin:0 0">Midlands</div>
<div class="a" style="left:96.95px;width:200px;text-align:center;top:552px;font-size:10.8px;line-height:10.8px;color:#000;font-weight:normal;font-style:normal;">M</div>
<div class="a" style="left:160.10px;width:200px;text-align:center;top:552px;font-size:10.8px;line-height:10.8px;color:#000;font-weight:normal;font-style:normal;">29</div>
<div class="a" style="left:298.7px;width:59.17500000000001px;text-align:right;top:552px;font-size:10.8px;line-height:10.8px;letter-spacing:0.275px;color:#000">92.0%</div>
<div class="a" style="left:-37.80px;width:200px;text-align:center;top:569px;font-size:10.8px;line-height:10.8px;color:#000;font-weight:normal;font-style:normal;">667563</div>
<div class="a" style="left:104.30px;top:569px;font-size:10.8px;line-height:10.8px;color:#000;font-weight:normal;font-style:normal;transform:scaleX(1.1785714285714286);transform-origin:0 0">Midlands</div>
<div class="a" style="left:96.95px;width:200px;text-align:center;top:569px;font-size:10.8px;line-height:10.8px;color:#000;font-weight:normal;font-style:normal;">F</div>
<div class="a" style="left:160.10px;width:200px;text-align:center;top:569px;font-size:10.8px;line-height:10.8px;color:#000;font-weight:normal;font-style:normal;">31</div>
<div class="a" style="left:298.7px;width:59.17500000000001px;text-align:right;top:569px;font-size:10.8px;line-height:10.8px;letter-spacing:0.275px;color:#000">48.0%</div>
<div class="a" style="left:-37.80px;width:200px;text-align:center;top:587px;font-size:10.8px;line-height:10.8px;color:#000;font-weight:normal;font-style:normal;">346366</div>
<div class="a" style="left:104.30px;top:587px;font-size:10.8px;line-height:10.8px;color:#000;font-weight:normal;font-style:normal;transform:scaleX(1.1073170731707316);transform-origin:0 0">Scotland</div>
<div class="a" style="left:96.95px;width:200px;text-align:center;top:587px;font-size:10.8px;line-height:10.8px;color:#000;font-weight:normal;font-style:normal;">F</div>
<div class="a" style="left:160.10px;width:200px;text-align:center;top:587px;font-size:10.8px;line-height:10.8px;color:#000;font-weight:normal;font-style:normal;">33</div>
<div class="a" style="left:298.7px;width:59.17500000000001px;text-align:right;top:587px;font-size:10.8px;line-height:10.8px;letter-spacing:0.275px;color:#000">53.0%</div>
<div class="a" style="left:-37.80px;width:200px;text-align:center;top:605px;font-size:10.8px;line-height:10.8px;color:#000;font-weight:normal;font-style:normal;">643456</div>
<div class="a" style="left:104.30px;top:605px;font-size:10.8px;line-height:10.8px;color:#9c5700;font-weight:normal;font-style:normal;transform:scaleX(1.1636363636363636);transform-origin:0 0">South-West</div>
<div class="a" style="left:96.95px;width:200px;text-align:center;top:605px;font-size:10.8px;line-height:10.8px;color:#000;font-weight:normal;font-style:normal;">F</div>
<div class="a" style="left:160.10px;width:200px;text-align:center;top:605px;font-size:10.8px;line-height:10.8px;color:#000;font-weight:normal;font-style:normal;">42</div>
<div class="a" style="left:298.7px;width:59.17500000000001px;text-align:right;top:605px;font-size:10.8px;line-height:10.8px;letter-spacing:0.275px;color:#000">86.0%</div>
<div class="a" style="left:359px;top:194px;width:59px;height:20px;border:2px solid #217346"></div>
<div class="a" style="left:413.00px;top:210.00px;width:6.00px;height:6.00px;background:#fff;"></div>
<div class="a" style="left:414.00px;top:211.00px;width:5.00px;height:5.00px;background:#217346;"></div>
<div class="a" style="left:1181.50px;top:178.00px;width:18.50px;height:452.00px;background:#e6e6e6;"></div>
<div class="a" style="left:1181.00px;top:178.50px;width:1.00px;height:452.00px;background:#c6c6c6;"></div>
<div class="a" style="left:1184.00px;top:541.00px;width:13.00px;height:77.00px;background:#f0f0f0;"></div>
<div class="a" style="left:1184px;top:180px;width:13.3px;height:13.3px;background:#fff;border:1px solid #a6a6a6;border-radius:1px"></div>
<svg class="a" style="left:1187.60px;top:184.30px" width="7" height="4" viewBox="0 0 7 4"><path d="M0 3.8 L3.3 0 L6.6 3.8Z" fill="#222"/></svg>
<div class="a" style="left:1184px;top:193px;width:13.3px;height:348px;background:#fff;border:1px solid #a6a6a6;border-radius:1px"></div>
<div class="a" style="left:1184px;top:618px;width:13.3px;height:12.7px;background:#fff;border:1px solid #a6a6a6;border-radius:1px"></div>
<svg class="a" style="left:1187.60px;top:622.50px" width="7" height="4" viewBox="0 0 7 4"><path d="M0 0 L3.3 3.8 L6.6 0Z" fill="#222"/></svg>
<div class="a" style="left:0.00px;top:630.00px;width:1200.00px;height:25.00px;background:#e6e6e6;"></div>
<div class="a" style="left:0.00px;top:630.00px;width:1200.00px;height:1.00px;background:#c6c6c6;"></div>
<svg class="a" style="left:23.50px;top:639.00px" width="4" height="7" viewBox="0 0 4 7"><path d="M3.5 0 V6 L0 3Z" fill="#c4c4c4"/></svg>
<svg class="a" style="left:49.00px;top:639.00px" width="4" height="7" viewBox="0 0 4 7"><path d="M0 0 V6 L3.5 3Z" fill="#c4c4c4"/></svg>
<div class="a" style="left:88.2px;top:630px;width:110.3px;height:23px;background:#fff;border-left:1px solid #c6c6c6;border-right:1px solid #c6c6c6"></div>
<div class="a" style="left:88.20px;top:650.00px;width:110.30px;height:2.00px;background:#217346;"></div>
<div class="a" style="left:98.70px;top:637px;font-size:11.5px;line-height:11.5px;color:#217346;font-weight:bold;font-style:normal;">Data Formatting</div>
<svg class="a" style="left:227.00px;top:635.00px" width="15" height="15" viewBox="0 0 15 15"><circle cx="7.5" cy="7.5" r="6.6" fill="none" stroke="#888" stroke-width="1.2"/><path d="M7.5 3.8 V11.2 M3.8 7.5 H11.2" stroke="#777" stroke-width="1.5"/></svg>
<div class="a" style="left:719.20px;top:638.50px;width:1.60px;height:1.60px;background:#9a9a9a;"></div>
<div class="a" style="left:719.20px;top:642.00px;width:1.60px;height:1.60px;background:#9a9a9a;"></div>
<div class="a" style="left:719.20px;top:645.50px;width:1.60px;height:1.60px;background:#9a9a9a;"></div>
<div class="a" style="left:1145.00px;top:636.20px;width:23.50px;height:13.20px;background:#f0f0f0;"></div>
<div class="a" style="left:734.2px;top:636.1px;width:13.3px;height:13.3px;background:#fff;border:1px solid #a6a6a6;border-radius:1px"></div>
<div class="a" style="left:746.5px;top:636.1px;width:399px;height:13.3px;background:#fff;border:1px solid #a6a6a6;border-radius:1px"></div>
<svg class="a" style="left:739.00px;top:639.50px" width="4" height="6" viewBox="0 0 4 6"><path d="M3.8 0 V6 L0 3Z" fill="#222"/></svg>
<div class="a" style="left:1168.3px;top:636.1px;width:13.1px;height:13.3px;background:#fff;border:1px solid #a6a6a6;border-radius:1px"></div>
<svg class="a" style="left:1173.50px;top:639.50px" width="4" height="6" viewBox="0 0 4 6"><path d="M0 0 V6 L3.8 3Z" fill="#222"/></svg>
<div class="a" style="left:0.00px;top:655.00px;width:1200.00px;height:20.00px;background:#f3f3f3;"></div>
<div class="a" style="left:0.00px;top:655.00px;width:1200.00px;height:0.80px;background:#dcdcdc;"></div>
<div class="a" style="left:10.00px;top:661px;font-size:9.3px;line-height:9.3px;color:#444;font-weight:normal;font-style:normal;">Ready</div>
<svg class="a" style="left:54.00px;top:658.00px" width="13" height="13" viewBox="0 0 13 13"><circle cx="2.8" cy="2.6" r="2.5" fill="#6a6a6a"/><rect x="5.5" y="1" width="7" height="2.2" fill="#6a6a6a"/><path d="M0.8 4 V12.2 H12.2 V3" fill="none" stroke="#6a6a6a" stroke-width="1.1"/><path d="M3 6.5 H10.5 M3 9 H10.5 M6 5 V11 M8.5 5 V11" stroke="#999" stroke-width="0.9"/></svg>
<svg class="a" style="left:81.00px;top:657.00px" width="16" height="15" viewBox="0 0 16 15"><path d="M4 2 A5.5 5.5 0 1 0 9 12" fill="none" stroke="#555" stroke-width="1.2" stroke-dasharray="2.2 1.2"/><path d="M7 1 V6 M5 4 L7 6 L9 4" fill="none" stroke="#555" stroke-width="1.1"/><path d="M9 10 L11 12.5 L15 7" fill="none" stroke="#555" stroke-width="1.4"/></svg>
<div class="a" style="left:98.70px;top:660px;font-size:10.1px;line-height:10.1px;color:#444;font-weight:normal;font-style:normal;">Accessibility: Good to go</div>
<div class="a" style="left:0.00px;top:673.00px;width:1025.00px;height:1.20px;background:#e4e4e4;"></div>
<div class="a" style="left:937.00px;top:655.30px;width:34.40px;height:17.50px;background:#c8c8c8;"></div>
<svg class="a" style="left:947.50px;top:658.00px" width="12" height="12" viewBox="0 0 12 12"><path d="M1 1 H11 V11 H1 Z M4.3 1 V11 M7.7 1 V11 M1 4.3 H11 M1 7.7 H11" fill="none" stroke="#6a6a6a" stroke-width="1.3"/></svg>
<svg class="a" style="left:982.50px;top:658.00px" width="13" height="12" viewBox="0 0 13 12"><rect x="0.7" y="0.7" width="11.6" height="10.6" fill="none" stroke="#6a6a6a" stroke-width="1.2"/><rect x="3" y="2.8" width="7" height="6.4" fill="none" stroke="#6a6a6a" stroke-width="1.1"/><rect x="4.5" y="4" width="4" height="4" fill="#b8b8b8"/></svg>
<svg class="a" style="left:1017.50px;top:658.00px" width="14" height="12" viewBox="0 0 14 12"><rect x="0.7" y="0.7" width="12" height="10.6" fill="none" stroke="#777" stroke-width="1.2"/><path d="M0.7 6.3 H8.3 V0.7 M3.2 0.7 V6.3 M5.7 0.7 V6.3" fill="none" stroke="#777" stroke-width="1"/></svg>
<div class="a" style="left:1047.00px;top:663.80px;width:6.70px;height:1.40px;background:#777;"></div>
<div class="a" style="left:1058.70px;top:664.00px;width:87.60px;height:1.50px;background:#8a8a8a;"></div>
<div class="a" style="left:1100.80px;top:660.00px;width:4.50px;height:9.70px;background:#474747;"></div>
<div class="a" style="left:1150.80px;top:664.00px;width:7.00px;height:1.20px;background:#666;"></div>
<div class="a" style="left:1153.70px;top:661.20px;width:1.20px;height:6.80px;background:#666;"></div>
<div class="a" style="left:1170.00px;top:660px;font-size:10px;line-height:10px;color:#444;font-weight:normal;font-style:normal;letter-spacing:-0.2px">100%</div>
</div></body></html>
